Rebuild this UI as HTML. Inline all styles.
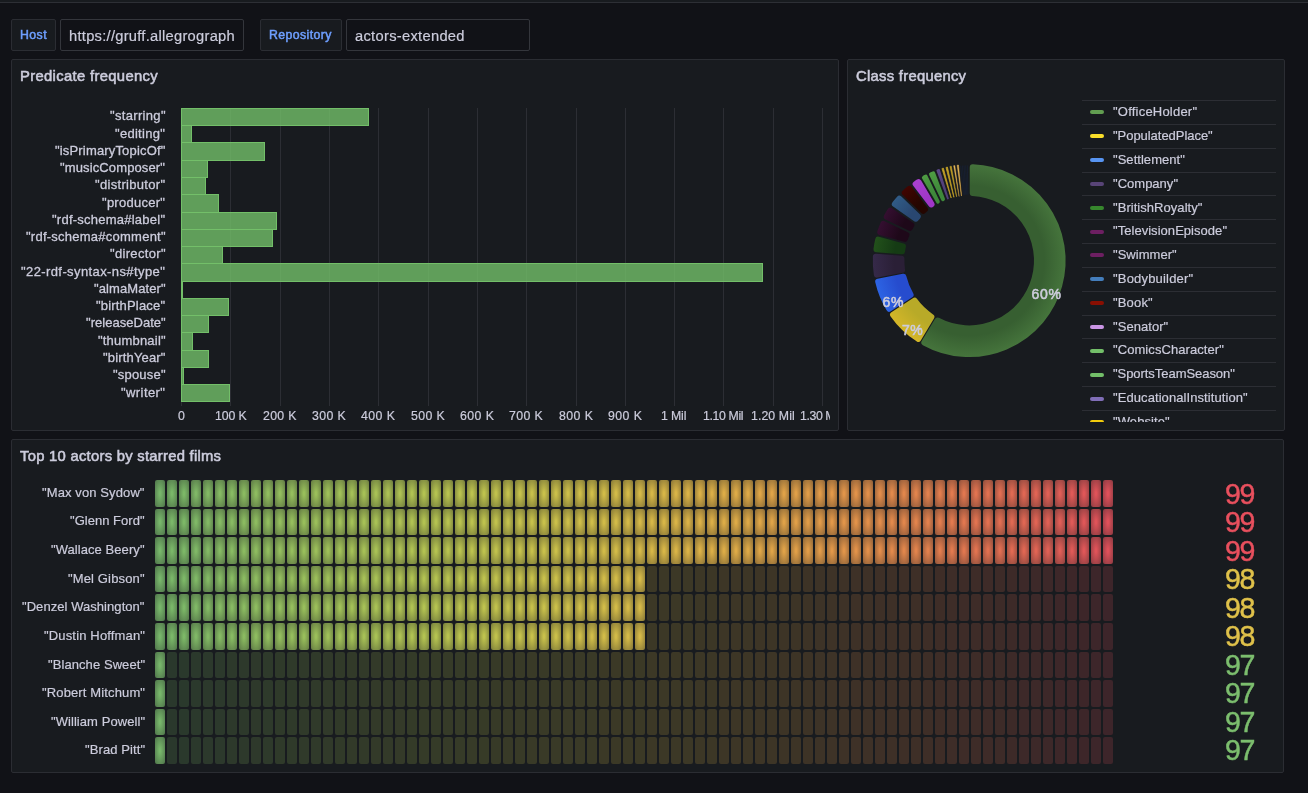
<!DOCTYPE html>
<html lang="en"><head><meta charset="utf-8"><title>Dashboard</title>
<style>
html,body{margin:0;padding:0;}
body{width:1308px;height:793px;background:#111217;overflow:hidden;position:relative;font-family:"Liberation Sans",sans-serif;color:rgb(204,204,220);font-size:13px;}
.abs{position:absolute;}
.t{position:absolute;white-space:nowrap;line-height:0;will-change:transform;}
.t::before{content:"";display:inline-block;width:0;height:40px;vertical-align:baseline;}
.topbar{position:absolute;left:0;top:0;width:1308px;height:2px;background:#181b1f;border-bottom:1px solid #2d2f35;}
.lbl{position:absolute;top:19px;height:32px;border:1px solid #2b2d33;border-radius:2px;background:#181b1f;box-sizing:border-box;}
.inp{position:absolute;top:19px;height:32px;border:1px solid #34363c;border-radius:2px;background:#111217;box-sizing:border-box;}
.panel{position:absolute;background:#181b1f;border:1px solid #2b2d33;border-radius:2px;box-sizing:border-box;overflow:hidden;}
.grid{position:absolute;width:1px;background:#2c2e34;}
.bar{position:absolute;box-sizing:border-box;}
.leg{position:absolute;left:0;width:194px;height:1px;background:#2c2e34;}
.mk{position:absolute;width:14px;height:4px;border-radius:2px;}
.row{position:absolute;left:143px;width:960px;height:26.63px;}
.row i{position:absolute;top:0;height:100%;width:10px;border-radius:2px;}
</style></head><body>
<div class="topbar"></div>

<div class="lbl" style="left:11px;width:45px;"></div>
<div class="inp" style="left:60px;width:184px;"></div>
<div class="lbl" style="left:260px;width:82px;"></div>
<div class="inp" style="left:346px;width:184px;"></div>
<span class="t" style="left:19.60px;top:-1px;font-size:12.3px;letter-spacing:0.434px;color:rgb(110,159,255);-webkit-text-stroke:0.5px currentColor;">Host</span>
<span class="t" style="left:69.40px;top:1px;font-size:14.7px;letter-spacing:0.270px;-webkit-text-stroke:0.2px currentColor;">https://gruff.allegrograph</span>
<span class="t" style="left:268.60px;top:-1px;font-size:12.3px;letter-spacing:0.413px;color:rgb(110,159,255);-webkit-text-stroke:0.5px currentColor;">Repository</span>
<span class="t" style="left:355.00px;top:1px;font-size:14.7px;letter-spacing:0.298px;-webkit-text-stroke:0.2px currentColor;">actors-extended</span>
<div class="panel" style="left:11px;top:59px;width:828px;height:372px;">
<span class="t" style="left:7.70px;top:-19px;font-size:14.8px;letter-spacing:0.338px;-webkit-text-stroke:0.55px currentColor;">Predicate frequency</span>
<div class="abs" style="left:8px;top:8px;width:810px;height:354px;overflow:hidden;">
<div class="grid" style="left:161px;top:40px;height:298px;"></div>
<div class="grid" style="left:210px;top:40px;height:298px;"></div>
<div class="grid" style="left:260px;top:40px;height:298px;"></div>
<div class="grid" style="left:309px;top:40px;height:298px;"></div>
<div class="grid" style="left:358px;top:40px;height:298px;"></div>
<div class="grid" style="left:408px;top:40px;height:298px;"></div>
<div class="grid" style="left:457px;top:40px;height:298px;"></div>
<div class="grid" style="left:506px;top:40px;height:298px;"></div>
<div class="grid" style="left:556px;top:40px;height:298px;"></div>
<div class="grid" style="left:605px;top:40px;height:298px;"></div>
<div class="grid" style="left:654px;top:40px;height:298px;"></div>
<div class="grid" style="left:703px;top:40px;height:298px;"></div>
<div class="grid" style="left:753px;top:40px;height:298px;"></div>
<div class="grid" style="left:802px;top:40px;height:298px;"></div>
<div class="bar" style="left:161px;top:40px;width:188px;height:18px;background:rgba(115,191,105,0.8);border:1px solid rgb(115,191,105);"></div>
<div class="bar" style="left:161px;top:57px;width:11px;height:18px;background:rgba(115,191,105,0.8);border:1px solid rgb(115,191,105);"></div>
<div class="bar" style="left:161px;top:74px;width:84px;height:19px;background:rgba(115,191,105,0.8);border:1px solid rgb(115,191,105);"></div>
<div class="bar" style="left:161px;top:92px;width:27px;height:18px;background:rgba(115,191,105,0.8);border:1px solid rgb(115,191,105);"></div>
<div class="bar" style="left:161px;top:109px;width:25px;height:18px;background:rgba(115,191,105,0.8);border:1px solid rgb(115,191,105);"></div>
<div class="bar" style="left:161px;top:126px;width:38px;height:19px;background:rgba(115,191,105,0.8);border:1px solid rgb(115,191,105);"></div>
<div class="bar" style="left:161px;top:144px;width:96px;height:18px;background:rgba(115,191,105,0.8);border:1px solid rgb(115,191,105);"></div>
<div class="bar" style="left:161px;top:161px;width:92px;height:18px;background:rgba(115,191,105,0.8);border:1px solid rgb(115,191,105);"></div>
<div class="bar" style="left:161px;top:178px;width:42px;height:18px;background:rgba(115,191,105,0.8);border:1px solid rgb(115,191,105);"></div>
<div class="bar" style="left:161px;top:195px;width:582px;height:19px;background:rgba(115,191,105,0.8);border:1px solid rgb(115,191,105);"></div>
<div class="bar" style="left:161px;top:213px;width:2px;height:18px;background:rgb(115,191,105);"></div>
<div class="bar" style="left:161px;top:230px;width:48px;height:18px;background:rgba(115,191,105,0.8);border:1px solid rgb(115,191,105);"></div>
<div class="bar" style="left:161px;top:247px;width:28px;height:18px;background:rgba(115,191,105,0.8);border:1px solid rgb(115,191,105);"></div>
<div class="bar" style="left:161px;top:264px;width:12px;height:19px;background:rgba(115,191,105,0.8);border:1px solid rgb(115,191,105);"></div>
<div class="bar" style="left:161px;top:282px;width:28px;height:18px;background:rgba(115,191,105,0.8);border:1px solid rgb(115,191,105);"></div>
<div class="bar" style="left:161px;top:299px;width:3px;height:18px;background:rgba(115,191,105,0.8);border:1px solid rgb(115,191,105);"></div>
<div class="bar" style="left:161px;top:316px;width:49px;height:18px;background:rgba(115,191,105,0.8);border:1px solid rgb(115,191,105);"></div>
<span class="t" style="left:89.70px;top:12px;font-size:13px;letter-spacing:0.325px;-webkit-text-stroke:0.3px currentColor;">"starring"</span>
<span class="t" style="left:95.40px;top:30px;font-size:13px;letter-spacing:0.282px;-webkit-text-stroke:0.3px currentColor;">"editing"</span>
<span class="t" style="left:34.90px;top:47px;font-size:13px;letter-spacing:0.167px;-webkit-text-stroke:0.3px currentColor;">"isPrimaryTopicOf"</span>
<span class="t" style="left:40.30px;top:64px;font-size:13px;letter-spacing:0.125px;-webkit-text-stroke:0.3px currentColor;">"musicComposer"</span>
<span class="t" style="left:75.20px;top:81px;font-size:13px;letter-spacing:0.307px;-webkit-text-stroke:0.3px currentColor;">"distributor"</span>
<span class="t" style="left:82.30px;top:99px;font-size:13px;letter-spacing:0.261px;-webkit-text-stroke:0.3px currentColor;">"producer"</span>
<span class="t" style="left:32.20px;top:116px;font-size:13px;letter-spacing:0.238px;-webkit-text-stroke:0.3px currentColor;">"rdf-schema#label"</span>
<span class="t" style="left:5.60px;top:133px;font-size:13px;letter-spacing:0.245px;-webkit-text-stroke:0.3px currentColor;">"rdf-schema#comment"</span>
<span class="t" style="left:89.70px;top:150px;font-size:13px;letter-spacing:0.325px;-webkit-text-stroke:0.3px currentColor;">"director"</span>
<span class="t" style="left:1.40px;top:168px;font-size:13px;letter-spacing:0.402px;-webkit-text-stroke:0.3px currentColor;">"22-rdf-syntax-ns#type"</span>
<span class="t" style="left:73.60px;top:185px;font-size:13px;letter-spacing:0.096px;-webkit-text-stroke:0.3px currentColor;">"almaMater"</span>
<span class="t" style="left:76.20px;top:202px;font-size:13px;letter-spacing:0.178px;-webkit-text-stroke:0.3px currentColor;">"birthPlace"</span>
<span class="t" style="left:65.50px;top:219px;font-size:13px;letter-spacing:0.031px;-webkit-text-stroke:0.3px currentColor;">"releaseDate"</span>
<span class="t" style="left:77.60px;top:237px;font-size:13px;letter-spacing:0.199px;-webkit-text-stroke:0.3px currentColor;">"thumbnail"</span>
<span class="t" style="left:82.70px;top:254px;font-size:13px;letter-spacing:0.170px;-webkit-text-stroke:0.3px currentColor;">"birthYear"</span>
<span class="t" style="left:92.70px;top:271px;font-size:13px;letter-spacing:0.192px;-webkit-text-stroke:0.3px currentColor;">"spouse"</span>
<span class="t" style="left:101.20px;top:289px;font-size:13px;letter-spacing:0.426px;-webkit-text-stroke:0.3px currentColor;">"writer"</span>
<span class="t" style="left:157.85px;top:312px;font-size:12.3px;-webkit-text-stroke:0.2px currentColor;">0</span>
<span class="t" style="left:194.55px;top:312px;font-size:12.3px;letter-spacing:-0.110px;-webkit-text-stroke:0.2px currentColor;">100 K</span>
<span class="t" style="left:242.95px;top:312px;font-size:12.3px;letter-spacing:0.340px;-webkit-text-stroke:0.2px currentColor;">200 K</span>
<span class="t" style="left:292.10px;top:312px;font-size:12.3px;letter-spacing:0.415px;-webkit-text-stroke:0.2px currentColor;">300 K</span>
<span class="t" style="left:341.30px;top:312px;font-size:12.3px;letter-spacing:0.465px;-webkit-text-stroke:0.2px currentColor;">400 K</span>
<span class="t" style="left:390.70px;top:312px;font-size:12.3px;letter-spacing:0.415px;-webkit-text-stroke:0.2px currentColor;">500 K</span>
<span class="t" style="left:439.90px;top:312px;font-size:12.3px;letter-spacing:0.465px;-webkit-text-stroke:0.2px currentColor;">600 K</span>
<span class="t" style="left:489.30px;top:312px;font-size:12.3px;letter-spacing:0.415px;-webkit-text-stroke:0.2px currentColor;">700 K</span>
<span class="t" style="left:538.50px;top:312px;font-size:12.3px;letter-spacing:0.465px;-webkit-text-stroke:0.2px currentColor;">800 K</span>
<span class="t" style="left:587.80px;top:312px;font-size:12.3px;letter-spacing:0.465px;-webkit-text-stroke:0.2px currentColor;">900 K</span>
<span class="t" style="left:641.40px;top:312px;font-size:12.3px;letter-spacing:-0.142px;-webkit-text-stroke:0.2px currentColor;">1 Mil</span>
<span class="t" style="left:683.15px;top:312px;font-size:12.3px;letter-spacing:-0.366px;-webkit-text-stroke:0.2px currentColor;">1.10 Mil</span>
<span class="t" style="left:730.85px;top:312px;font-size:12.3px;letter-spacing:0.091px;-webkit-text-stroke:0.2px currentColor;">1.20 Mil</span>
<span class="t" style="left:780.30px;top:312px;font-size:12.3px;-webkit-text-stroke:0.2px currentColor;letter-spacing:-0.4px;">1.30 Mil</span>
</div></div>
<div class="panel" style="left:847px;top:59px;width:438px;height:372px;">
<span class="t" style="left:7.80px;top:-19px;font-size:14.8px;letter-spacing:0.279px;-webkit-text-stroke:0.55px currentColor;">Class frequency</span>
<svg class="abs" style="left:0;top:0;" width="436" height="370" viewBox="0 0 436 370">
<defs>
<radialGradient id="g629E51" gradientUnits="userSpaceOnUse" cx="0" cy="0" r="112.4"><stop offset="0.667" stop-color="rgb(55,95,49)"/><stop offset="1" stop-color="rgb(80,132,68)"/></radialGradient>
<radialGradient id="gFADE2A" gradientUnits="userSpaceOnUse" cx="0" cy="0" r="112.4"><stop offset="0.667" stop-color="rgb(184,170,40)"/><stop offset="1" stop-color="rgb(234,192,40)"/></radialGradient>
<radialGradient id="g5794F2" gradientUnits="userSpaceOnUse" cx="0" cy="0" r="112.4"><stop offset="0.667" stop-color="rgb(38,76,206)"/><stop offset="1" stop-color="rgb(50,118,245)"/></radialGradient>
<radialGradient id="g584477" gradientUnits="userSpaceOnUse" cx="0" cy="0" r="112.4"><stop offset="0.667" stop-color="rgb(42,31,54)"/><stop offset="1" stop-color="rgb(62,49,87)"/></radialGradient>
<radialGradient id="g37872D" gradientUnits="userSpaceOnUse" cx="0" cy="0" r="112.4"><stop offset="0.667" stop-color="rgb(21,59,20)"/><stop offset="1" stop-color="rgb(44,97,32)"/></radialGradient>
<radialGradient id="g6D1F62" gradientUnits="userSpaceOnUse" cx="0" cy="0" r="112.4"><stop offset="0.667" stop-color="rgb(30,8,25)"/><stop offset="1" stop-color="rgb(69,20,66)"/></radialGradient>
<radialGradient id="g447EBC" gradientUnits="userSpaceOnUse" cx="0" cy="0" r="112.4"><stop offset="0.667" stop-color="rgb(41,71,113)"/><stop offset="1" stop-color="rgb(54,107,151)"/></radialGradient>
<radialGradient id="g890F02" gradientUnits="userSpaceOnUse" cx="0" cy="0" r="112.4"><stop offset="0.667" stop-color="rgb(36,6,1)"/><stop offset="1" stop-color="rgb(87,4,1)"/></radialGradient>
<radialGradient id="gCA95E5" gradientUnits="userSpaceOnUse" cx="0" cy="0" r="112.4"><stop offset="0.667" stop-color="rgb(160,55,200)"/><stop offset="1" stop-color="rgb(176,72,212)"/></radialGradient>
<radialGradient id="g73BF69" gradientUnits="userSpaceOnUse" cx="0" cy="0" r="112.4"><stop offset="0.667" stop-color="rgb(62,136,58)"/><stop offset="1" stop-color="rgb(91,172,73)"/></radialGradient>
<radialGradient id="g806EB7" gradientUnits="userSpaceOnUse" cx="0" cy="0" r="112.4"><stop offset="0.667" stop-color="rgb(80,62,120)"/><stop offset="1" stop-color="rgb(96,78,142)"/></radialGradient>
<radialGradient id="gF2CC0C" gradientUnits="userSpaceOnUse" cx="0" cy="0" r="112.4"><stop offset="0.667" stop-color="rgb(184,152,36)"/><stop offset="1" stop-color="rgb(206,170,42)"/></radialGradient>
<radialGradient id="gF2C96D" gradientUnits="userSpaceOnUse" cx="0" cy="0" r="112.4"><stop offset="0.667" stop-color="rgb(222,172,75)"/><stop offset="1" stop-color="rgb(235,190,95)"/></radialGradient>
</defs>
<g transform="translate(121.2,200.6)">
<path d="M3.55,-93.33A93.40,93.40 0 1 1 -44.88,81.91L-31.72,59.92A67.80,67.80 0 1 0 3.55,-67.71Z" fill="url(#g629E51)" stroke="url(#g629E51)" stroke-width="6.00" stroke-linejoin="round"/>
<path d="M-50.98,78.26A93.40,93.40 0 0 1 -76.15,54.08L-54.71,40.04A67.80,67.80 0 0 0 -37.82,56.27Z" fill="url(#gFADE2A)" stroke="url(#gFADE2A)" stroke-width="6.00" stroke-linejoin="round"/>
<path d="M-80.04,48.13A93.40,93.40 0 0 1 -91.01,20.98L-65.84,16.17A67.80,67.80 0 0 0 -58.60,34.10Z" fill="url(#g5794F2)" stroke="url(#g5794F2)" stroke-width="6.00" stroke-linejoin="round"/>
<path d="M-92.34,14.00A93.40,93.40 0 0 1 -93.32,-3.95L-67.77,-1.89A67.80,67.80 0 0 0 -67.17,9.20Z" fill="url(#g584477)" stroke="url(#g584477)" stroke-width="6.00" stroke-linejoin="round"/>
<path d="M-92.70,-11.42A93.40,93.40 0 0 1 -91.01,-20.97L-66.30,-14.17A67.80,67.80 0 0 0 -67.15,-9.37Z" fill="url(#g37872D)" stroke="url(#g37872D)" stroke-width="6.00" stroke-linejoin="round"/>
<path d="M-88.92,-28.59A93.40,93.40 0 0 1 -85.86,-36.76L-62.75,-25.68A67.80,67.80 0 0 0 -64.21,-21.78Z" fill="url(#g6D1F62)" stroke="url(#g6D1F62)" stroke-width="6.00" stroke-linejoin="round"/>
<path d="M-82.45,-43.88A93.40,93.40 0 0 1 -78.88,-50.01L-57.83,-35.39A67.80,67.80 0 0 0 -59.33,-32.81Z" fill="url(#g6D1F62)" stroke="url(#g6D1F62)" stroke-width="6.00" stroke-linejoin="round"/>
<path d="M-74.37,-56.50A93.40,93.40 0 0 1 -69.87,-61.98L-51.43,-44.18A67.80,67.80 0 0 0 -53.33,-41.87Z" fill="url(#g447EBC)" stroke="url(#g447EBC)" stroke-width="6.00" stroke-linejoin="round"/>
<path d="M-64.38,-67.66A93.40,93.40 0 0 1 -59.82,-71.73L-44.25,-51.37A67.80,67.80 0 0 0 -45.94,-49.86Z" fill="url(#g890F02)" stroke="url(#g890F02)" stroke-width="6.00" stroke-linejoin="round"/>
<path d="M-53.60,-76.54A93.44,93.44 0 0 1 -50.61,-78.55L-37.60,-56.37A67.76,67.76 0 0 0 -37.98,-56.11Z" fill="url(#gCA95E5)" stroke="url(#gCA95E5)" stroke-width="5.92" stroke-linejoin="round"/>
<path d="M-45.60,-82.98A94.69,94.69 0 0 1 -43.30,-84.21L-31.12,-58.79A66.51,66.51 0 0 0 -31.33,-58.67Z" fill="url(#g73BF69)" stroke="url(#g73BF69)" stroke-width="3.43" stroke-linejoin="round"/>
<path d="M-38.34,-86.45A94.57,94.57 0 0 1 -35.86,-87.51L-26.02,-61.34A66.63,66.63 0 0 0 -26.26,-61.23Z" fill="url(#g73BF69)" stroke="url(#g73BF69)" stroke-width="3.65" stroke-linejoin="round"/>
<path d="M-31.91,-90.05A95.53,95.53 0 0 1 -30.14,-90.66L-21.25,-62.13A65.67,65.67 0 0 0 -21.40,-62.08Z" fill="url(#g806EB7)" stroke="url(#g806EB7)" stroke-width="1.73" stroke-linejoin="round"/>
<path d="M-27.24,-92.04A95.99,95.99 0 0 1 -25.84,-92.44L-17.97,-62.69A65.21,65.21 0 0 0 -18.09,-62.66Z" fill="url(#gF2CC0C)" stroke="url(#gF2CC0C)" stroke-width="0.83" stroke-linejoin="round"/>
<path d="M-23.20,-93.14A95.99,95.99 0 0 1 -21.78,-93.48L-15.22,-63.41A65.21,65.21 0 0 0 -15.34,-63.38Z" fill="url(#gF2CC0C)" stroke="url(#gF2CC0C)" stroke-width="0.83" stroke-linejoin="round"/>
<path d="M-19.25,-94.15A96.10,96.10 0 0 1 -17.92,-94.41L-12.53,-63.88A65.10,65.10 0 0 0 -12.64,-63.86Z" fill="url(#gF2CC0C)" stroke="url(#gF2CC0C)" stroke-width="0.60" stroke-linejoin="round"/>
<path d="M-15.59,-94.94A96.21,96.21 0 0 1 -14.35,-95.14L-10.06,-64.20A64.99,64.99 0 0 0 -10.16,-64.19Z" fill="url(#gF2C96D)" stroke="url(#gF2C96D)" stroke-width="0.38" stroke-linejoin="round"/>
<path d="M-12.03,-95.40A96.16,96.16 0 0 1 -10.74,-95.55L-7.65,-64.59A65.04,65.04 0 0 0 -7.76,-64.58Z" fill="url(#gF2C96D)" stroke="url(#gF2C96D)" stroke-width="0.49" stroke-linejoin="round"/>
<path d="M-5.89,-66.04L-8.44,-94.52" stroke="rgb(23,33,54)" stroke-width="0.7" stroke-linecap="round" fill="none"/>
<path d="M-4.74,-66.13L-6.79,-94.66" stroke="rgb(23,33,54)" stroke-width="0.7" stroke-linecap="round" fill="none"/>
<path d="M-3.59,-66.20L-5.13,-94.76" stroke="rgb(23,33,54)" stroke-width="0.7" stroke-linecap="round" fill="none"/>
<path d="M-2.43,-66.26L-3.48,-94.84" stroke="rgb(23,33,54)" stroke-width="0.7" stroke-linecap="round" fill="none"/>
<path d="M-1.27,-66.29L-1.82,-94.88" stroke="rgb(23,33,54)" stroke-width="0.7" stroke-linecap="round" fill="none"/>
<text x="77.4" y="38.8" text-anchor="middle" font-family="Liberation Sans, sans-serif" font-size="14" letter-spacing="0.7" fill="rgb(204,204,220)" stroke="rgb(204,204,220)" stroke-width="0.6">60%</text>
<text x="-56.5" y="74.2" text-anchor="middle" font-family="Liberation Sans, sans-serif" font-size="14" letter-spacing="0.7" fill="rgb(204,204,220)" stroke="rgb(204,204,220)" stroke-width="0.6">7%</text>
<text x="-75.8" y="46.2" text-anchor="middle" font-family="Liberation Sans, sans-serif" font-size="14" letter-spacing="0.7" fill="rgb(204,204,220)" stroke="rgb(204,204,220)" stroke-width="0.6">6%</text>
</g></svg>
<div class="abs" style="left:234px;top:36px;width:194px;height:326px;overflow:hidden;">
<div class="leg" style="top:4px;"></div>
<div class="mk" style="left:8px;top:14px;background:rgb(98,158,81)"></div>
<span class="t" style="left:31.00px;top:-20px;font-size:13px;letter-spacing:0.212px;-webkit-text-stroke:0.2px currentColor;">"OfficeHolder"</span>
<div class="leg" style="top:28px;"></div>
<div class="mk" style="left:8px;top:38px;background:rgb(250,222,42)"></div>
<span class="t" style="left:31.00px;top:4px;font-size:13px;letter-spacing:-0.041px;-webkit-text-stroke:0.2px currentColor;">"PopulatedPlace"</span>
<div class="leg" style="top:52px;"></div>
<div class="mk" style="left:8px;top:62px;background:rgb(87,148,242)"></div>
<span class="t" style="left:31.00px;top:28px;font-size:13px;letter-spacing:0.039px;-webkit-text-stroke:0.2px currentColor;">"Settlement"</span>
<div class="leg" style="top:76px;"></div>
<div class="mk" style="left:8px;top:86px;background:rgb(88,68,119)"></div>
<span class="t" style="left:31.00px;top:52px;font-size:13px;letter-spacing:0.016px;-webkit-text-stroke:0.2px currentColor;">"Company"</span>
<div class="leg" style="top:99px;"></div>
<div class="mk" style="left:8px;top:110px;background:rgb(55,135,45)"></div>
<span class="t" style="left:31.00px;top:76px;font-size:13px;letter-spacing:0.046px;-webkit-text-stroke:0.2px currentColor;">"BritishRoyalty"</span>
<div class="leg" style="top:123px;"></div>
<div class="mk" style="left:8px;top:134px;background:rgb(109,31,98)"></div>
<span class="t" style="left:31.00px;top:99px;font-size:13px;letter-spacing:0.039px;-webkit-text-stroke:0.2px currentColor;">"TelevisionEpisode"</span>
<div class="leg" style="top:147px;"></div>
<div class="mk" style="left:8px;top:157px;background:rgb(109,31,98)"></div>
<span class="t" style="left:31.00px;top:123px;font-size:13px;letter-spacing:0.037px;-webkit-text-stroke:0.2px currentColor;">"Swimmer"</span>
<div class="leg" style="top:171px;"></div>
<div class="mk" style="left:8px;top:181px;background:rgb(68,126,188)"></div>
<span class="t" style="left:31.00px;top:147px;font-size:13px;letter-spacing:0.184px;-webkit-text-stroke:0.2px currentColor;">"Bodybuilder"</span>
<div class="leg" style="top:195px;"></div>
<div class="mk" style="left:8px;top:205px;background:rgb(137,15,2)"></div>
<span class="t" style="left:31.00px;top:171px;font-size:13px;letter-spacing:0.165px;-webkit-text-stroke:0.2px currentColor;">"Book"</span>
<div class="leg" style="top:219px;"></div>
<div class="mk" style="left:8px;top:229px;background:rgb(202,149,229)"></div>
<span class="t" style="left:31.00px;top:195px;font-size:13px;letter-spacing:0.054px;-webkit-text-stroke:0.2px currentColor;">"Senator"</span>
<div class="leg" style="top:242px;"></div>
<div class="mk" style="left:8px;top:253px;background:rgb(115,191,105)"></div>
<span class="t" style="left:31.00px;top:218px;font-size:13px;letter-spacing:0.071px;-webkit-text-stroke:0.2px currentColor;">"ComicsCharacter"</span>
<div class="leg" style="top:266px;"></div>
<div class="mk" style="left:8px;top:277px;background:rgb(115,191,105)"></div>
<span class="t" style="left:31.00px;top:242px;font-size:13px;letter-spacing:-0.052px;-webkit-text-stroke:0.2px currentColor;">"SportsTeamSeason"</span>
<div class="leg" style="top:290px;"></div>
<div class="mk" style="left:8px;top:301px;background:rgb(128,110,183)"></div>
<span class="t" style="left:31.00px;top:266px;font-size:13px;letter-spacing:0.078px;-webkit-text-stroke:0.2px currentColor;">"EducationalInstitution"</span>
<div class="leg" style="top:314px;"></div>
<div class="mk" style="left:8px;top:324px;background:rgb(242,204,12)"></div>
<span class="t" style="left:31.00px;top:290px;font-size:13px;letter-spacing:0.091px;-webkit-text-stroke:0.2px currentColor;">"Website"</span>
</div>
</div>
<div class="panel" style="left:11px;top:439px;width:1273px;height:334px;">
<span class="t" style="left:7.90px;top:-19px;font-size:14.8px;letter-spacing:0.267px;-webkit-text-stroke:0.55px currentColor;">Top 10 actors by starred films</span>
<span class="t" style="left:30.00px;top:17px;font-size:13px;letter-spacing:0.107px;-webkit-text-stroke:0.2px currentColor;">"Max von Sydow"</span>
<div class="row" style="top:40px;height:27px;"><i style="left:0px;background:radial-gradient(rgba(124,190,110,0.95) 10%,rgba(124,190,110,0.55))"></i><i style="left:12px;background:radial-gradient(rgba(127,191,108,0.95) 10%,rgba(127,191,108,0.55))"></i><i style="left:24px;background:radial-gradient(rgba(130,192,107,0.95) 10%,rgba(130,192,107,0.55))"></i><i style="left:36px;background:radial-gradient(rgba(133,192,106,0.95) 10%,rgba(133,192,106,0.55))"></i><i style="left:48px;background:radial-gradient(rgba(136,193,104,0.95) 10%,rgba(136,193,104,0.55))"></i><i style="left:60px;background:radial-gradient(rgba(139,194,103,0.95) 10%,rgba(139,194,103,0.55))"></i><i style="left:72px;background:radial-gradient(rgba(142,195,102,0.95) 10%,rgba(142,195,102,0.55))"></i><i style="left:84px;background:radial-gradient(rgba(145,195,100,0.95) 10%,rgba(145,195,100,0.55))"></i><i style="left:96px;background:radial-gradient(rgba(148,196,99,0.95) 10%,rgba(148,196,99,0.55))"></i><i style="left:108px;background:radial-gradient(rgba(151,197,98,0.95) 10%,rgba(151,197,98,0.55))"></i><i style="left:120px;background:radial-gradient(rgba(154,198,97,0.95) 10%,rgba(154,198,97,0.55))"></i><i style="left:132px;background:radial-gradient(rgba(156,198,96,0.95) 10%,rgba(156,198,96,0.55))"></i><i style="left:144px;background:radial-gradient(rgba(159,199,94,0.95) 10%,rgba(159,199,94,0.55))"></i><i style="left:156px;background:radial-gradient(rgba(162,199,93,0.95) 10%,rgba(162,199,93,0.55))"></i><i style="left:168px;background:radial-gradient(rgba(165,200,92,0.95) 10%,rgba(165,200,92,0.55))"></i><i style="left:180px;background:radial-gradient(rgba(168,201,91,0.95) 10%,rgba(168,201,91,0.55))"></i><i style="left:192px;background:radial-gradient(rgba(171,201,90,0.95) 10%,rgba(171,201,90,0.55))"></i><i style="left:204px;background:radial-gradient(rgba(174,201,89,0.95) 10%,rgba(174,201,89,0.55))"></i><i style="left:216px;background:radial-gradient(rgba(176,202,88,0.95) 10%,rgba(176,202,88,0.55))"></i><i style="left:228px;background:radial-gradient(rgba(179,202,87,0.95) 10%,rgba(179,202,87,0.55))"></i><i style="left:240px;background:radial-gradient(rgba(182,202,86,0.95) 10%,rgba(182,202,86,0.55))"></i><i style="left:252px;background:radial-gradient(rgba(184,203,85,0.95) 10%,rgba(184,203,85,0.55))"></i><i style="left:264px;background:radial-gradient(rgba(187,203,84,0.95) 10%,rgba(187,203,84,0.55))"></i><i style="left:276px;background:radial-gradient(rgba(189,203,83,0.95) 10%,rgba(189,203,83,0.55))"></i><i style="left:288px;background:radial-gradient(rgba(192,203,82,0.95) 10%,rgba(192,203,82,0.55))"></i><i style="left:300px;background:radial-gradient(rgba(194,203,81,0.95) 10%,rgba(194,203,81,0.55))"></i><i style="left:312px;background:radial-gradient(rgba(197,203,81,0.95) 10%,rgba(197,203,81,0.55))"></i><i style="left:324px;background:radial-gradient(rgba(199,203,80,0.95) 10%,rgba(199,203,80,0.55))"></i><i style="left:336px;background:radial-gradient(rgba(201,202,79,0.95) 10%,rgba(201,202,79,0.55))"></i><i style="left:348px;background:radial-gradient(rgba(204,202,79,0.95) 10%,rgba(204,202,79,0.55))"></i><i style="left:360px;background:radial-gradient(rgba(206,202,78,0.95) 10%,rgba(206,202,78,0.55))"></i><i style="left:372px;background:radial-gradient(rgba(208,201,77,0.95) 10%,rgba(208,201,77,0.55))"></i><i style="left:384px;background:radial-gradient(rgba(210,201,77,0.95) 10%,rgba(210,201,77,0.55))"></i><i style="left:396px;background:radial-gradient(rgba(212,200,76,0.95) 10%,rgba(212,200,76,0.55))"></i><i style="left:408px;background:radial-gradient(rgba(214,199,76,0.95) 10%,rgba(214,199,76,0.55))"></i><i style="left:420px;background:radial-gradient(rgba(216,198,75,0.95) 10%,rgba(216,198,75,0.55))"></i><i style="left:432px;background:radial-gradient(rgba(217,197,75,0.95) 10%,rgba(217,197,75,0.55))"></i><i style="left:444px;background:radial-gradient(rgba(219,196,74,0.95) 10%,rgba(219,196,74,0.55))"></i><i style="left:456px;background:radial-gradient(rgba(220,195,74,0.95) 10%,rgba(220,195,74,0.55))"></i><i style="left:468px;background:radial-gradient(rgba(222,194,74,0.95) 10%,rgba(222,194,74,0.55))"></i><i style="left:480px;background:radial-gradient(rgba(223,193,74,0.95) 10%,rgba(223,193,74,0.55))"></i><i style="left:492px;background:radial-gradient(rgba(225,191,73,0.95) 10%,rgba(225,191,73,0.55))"></i><i style="left:504px;background:radial-gradient(rgba(226,190,73,0.95) 10%,rgba(226,190,73,0.55))"></i><i style="left:516px;background:radial-gradient(rgba(227,188,73,0.95) 10%,rgba(227,188,73,0.55))"></i><i style="left:528px;background:radial-gradient(rgba(228,186,73,0.95) 10%,rgba(228,186,73,0.55))"></i><i style="left:540px;background:radial-gradient(rgba(229,184,73,0.95) 10%,rgba(229,184,73,0.55))"></i><i style="left:552px;background:radial-gradient(rgba(230,182,73,0.95) 10%,rgba(230,182,73,0.55))"></i><i style="left:564px;background:radial-gradient(rgba(231,180,73,0.95) 10%,rgba(231,180,73,0.55))"></i><i style="left:576px;background:radial-gradient(rgba(232,178,73,0.95) 10%,rgba(232,178,73,0.55))"></i><i style="left:588px;background:radial-gradient(rgba(232,176,73,0.95) 10%,rgba(232,176,73,0.55))"></i><i style="left:600px;background:radial-gradient(rgba(233,173,73,0.95) 10%,rgba(233,173,73,0.55))"></i><i style="left:612px;background:radial-gradient(rgba(234,171,74,0.95) 10%,rgba(234,171,74,0.55))"></i><i style="left:624px;background:radial-gradient(rgba(234,169,74,0.95) 10%,rgba(234,169,74,0.55))"></i><i style="left:636px;background:radial-gradient(rgba(235,166,74,0.95) 10%,rgba(235,166,74,0.55))"></i><i style="left:648px;background:radial-gradient(rgba(235,163,74,0.95) 10%,rgba(235,163,74,0.55))"></i><i style="left:660px;background:radial-gradient(rgba(235,161,75,0.95) 10%,rgba(235,161,75,0.55))"></i><i style="left:672px;background:radial-gradient(rgba(236,158,75,0.95) 10%,rgba(236,158,75,0.55))"></i><i style="left:684px;background:radial-gradient(rgba(236,155,76,0.95) 10%,rgba(236,155,76,0.55))"></i><i style="left:696px;background:radial-gradient(rgba(236,152,76,0.95) 10%,rgba(236,152,76,0.55))"></i><i style="left:708px;background:radial-gradient(rgba(236,149,76,0.95) 10%,rgba(236,149,76,0.55))"></i><i style="left:720px;background:radial-gradient(rgba(236,146,77,0.95) 10%,rgba(236,146,77,0.55))"></i><i style="left:732px;background:radial-gradient(rgba(236,143,78,0.95) 10%,rgba(236,143,78,0.55))"></i><i style="left:744px;background:radial-gradient(rgba(236,140,78,0.95) 10%,rgba(236,140,78,0.55))"></i><i style="left:756px;background:radial-gradient(rgba(236,137,79,0.95) 10%,rgba(236,137,79,0.55))"></i><i style="left:768px;background:radial-gradient(rgba(236,134,80,0.95) 10%,rgba(236,134,80,0.55))"></i><i style="left:780px;background:radial-gradient(rgba(236,130,80,0.95) 10%,rgba(236,130,80,0.55))"></i><i style="left:792px;background:radial-gradient(rgba(236,127,81,0.95) 10%,rgba(236,127,81,0.55))"></i><i style="left:804px;background:radial-gradient(rgba(236,124,82,0.95) 10%,rgba(236,124,82,0.55))"></i><i style="left:816px;background:radial-gradient(rgba(236,120,83,0.95) 10%,rgba(236,120,83,0.55))"></i><i style="left:828px;background:radial-gradient(rgba(236,117,83,0.95) 10%,rgba(236,117,83,0.55))"></i><i style="left:840px;background:radial-gradient(rgba(235,114,84,0.95) 10%,rgba(235,114,84,0.55))"></i><i style="left:852px;background:radial-gradient(rgba(235,110,85,0.95) 10%,rgba(235,110,85,0.55))"></i><i style="left:864px;background:radial-gradient(rgba(235,107,86,0.95) 10%,rgba(235,107,86,0.55))"></i><i style="left:876px;background:radial-gradient(rgba(235,104,87,0.95) 10%,rgba(235,104,87,0.55))"></i><i style="left:888px;background:radial-gradient(rgba(234,100,88,0.95) 10%,rgba(234,100,88,0.55))"></i><i style="left:900px;background:radial-gradient(rgba(234,97,89,0.95) 10%,rgba(234,97,89,0.55))"></i><i style="left:912px;background:radial-gradient(rgba(234,93,90,0.95) 10%,rgba(234,93,90,0.55))"></i><i style="left:924px;background:radial-gradient(rgba(234,90,91,0.95) 10%,rgba(234,90,91,0.55))"></i><i style="left:936px;background:radial-gradient(rgba(233,86,92,0.95) 10%,rgba(233,86,92,0.55))"></i><i style="left:948px;background:radial-gradient(rgba(233,83,93,0.95) 10%,rgba(233,83,93,0.55))"></i></div>
<span class="t" style="left:1212.50px;top:24px;font-size:28.6px;letter-spacing:-1.413px;color:rgb(233,80,94);-webkit-text-stroke:0.45px currentColor;">99</span>
<span class="t" style="left:58.00px;top:45px;font-size:13px;letter-spacing:0.021px;-webkit-text-stroke:0.2px currentColor;">"Glenn Ford"</span>
<div class="row" style="top:69px;height:26px;"><i style="left:0px;background:radial-gradient(rgba(124,190,110,0.95) 10%,rgba(124,190,110,0.55))"></i><i style="left:12px;background:radial-gradient(rgba(127,191,108,0.95) 10%,rgba(127,191,108,0.55))"></i><i style="left:24px;background:radial-gradient(rgba(130,192,107,0.95) 10%,rgba(130,192,107,0.55))"></i><i style="left:36px;background:radial-gradient(rgba(133,192,106,0.95) 10%,rgba(133,192,106,0.55))"></i><i style="left:48px;background:radial-gradient(rgba(136,193,104,0.95) 10%,rgba(136,193,104,0.55))"></i><i style="left:60px;background:radial-gradient(rgba(139,194,103,0.95) 10%,rgba(139,194,103,0.55))"></i><i style="left:72px;background:radial-gradient(rgba(142,195,102,0.95) 10%,rgba(142,195,102,0.55))"></i><i style="left:84px;background:radial-gradient(rgba(145,195,100,0.95) 10%,rgba(145,195,100,0.55))"></i><i style="left:96px;background:radial-gradient(rgba(148,196,99,0.95) 10%,rgba(148,196,99,0.55))"></i><i style="left:108px;background:radial-gradient(rgba(151,197,98,0.95) 10%,rgba(151,197,98,0.55))"></i><i style="left:120px;background:radial-gradient(rgba(154,198,97,0.95) 10%,rgba(154,198,97,0.55))"></i><i style="left:132px;background:radial-gradient(rgba(156,198,96,0.95) 10%,rgba(156,198,96,0.55))"></i><i style="left:144px;background:radial-gradient(rgba(159,199,94,0.95) 10%,rgba(159,199,94,0.55))"></i><i style="left:156px;background:radial-gradient(rgba(162,199,93,0.95) 10%,rgba(162,199,93,0.55))"></i><i style="left:168px;background:radial-gradient(rgba(165,200,92,0.95) 10%,rgba(165,200,92,0.55))"></i><i style="left:180px;background:radial-gradient(rgba(168,201,91,0.95) 10%,rgba(168,201,91,0.55))"></i><i style="left:192px;background:radial-gradient(rgba(171,201,90,0.95) 10%,rgba(171,201,90,0.55))"></i><i style="left:204px;background:radial-gradient(rgba(174,201,89,0.95) 10%,rgba(174,201,89,0.55))"></i><i style="left:216px;background:radial-gradient(rgba(176,202,88,0.95) 10%,rgba(176,202,88,0.55))"></i><i style="left:228px;background:radial-gradient(rgba(179,202,87,0.95) 10%,rgba(179,202,87,0.55))"></i><i style="left:240px;background:radial-gradient(rgba(182,202,86,0.95) 10%,rgba(182,202,86,0.55))"></i><i style="left:252px;background:radial-gradient(rgba(184,203,85,0.95) 10%,rgba(184,203,85,0.55))"></i><i style="left:264px;background:radial-gradient(rgba(187,203,84,0.95) 10%,rgba(187,203,84,0.55))"></i><i style="left:276px;background:radial-gradient(rgba(189,203,83,0.95) 10%,rgba(189,203,83,0.55))"></i><i style="left:288px;background:radial-gradient(rgba(192,203,82,0.95) 10%,rgba(192,203,82,0.55))"></i><i style="left:300px;background:radial-gradient(rgba(194,203,81,0.95) 10%,rgba(194,203,81,0.55))"></i><i style="left:312px;background:radial-gradient(rgba(197,203,81,0.95) 10%,rgba(197,203,81,0.55))"></i><i style="left:324px;background:radial-gradient(rgba(199,203,80,0.95) 10%,rgba(199,203,80,0.55))"></i><i style="left:336px;background:radial-gradient(rgba(201,202,79,0.95) 10%,rgba(201,202,79,0.55))"></i><i style="left:348px;background:radial-gradient(rgba(204,202,79,0.95) 10%,rgba(204,202,79,0.55))"></i><i style="left:360px;background:radial-gradient(rgba(206,202,78,0.95) 10%,rgba(206,202,78,0.55))"></i><i style="left:372px;background:radial-gradient(rgba(208,201,77,0.95) 10%,rgba(208,201,77,0.55))"></i><i style="left:384px;background:radial-gradient(rgba(210,201,77,0.95) 10%,rgba(210,201,77,0.55))"></i><i style="left:396px;background:radial-gradient(rgba(212,200,76,0.95) 10%,rgba(212,200,76,0.55))"></i><i style="left:408px;background:radial-gradient(rgba(214,199,76,0.95) 10%,rgba(214,199,76,0.55))"></i><i style="left:420px;background:radial-gradient(rgba(216,198,75,0.95) 10%,rgba(216,198,75,0.55))"></i><i style="left:432px;background:radial-gradient(rgba(217,197,75,0.95) 10%,rgba(217,197,75,0.55))"></i><i style="left:444px;background:radial-gradient(rgba(219,196,74,0.95) 10%,rgba(219,196,74,0.55))"></i><i style="left:456px;background:radial-gradient(rgba(220,195,74,0.95) 10%,rgba(220,195,74,0.55))"></i><i style="left:468px;background:radial-gradient(rgba(222,194,74,0.95) 10%,rgba(222,194,74,0.55))"></i><i style="left:480px;background:radial-gradient(rgba(223,193,74,0.95) 10%,rgba(223,193,74,0.55))"></i><i style="left:492px;background:radial-gradient(rgba(225,191,73,0.95) 10%,rgba(225,191,73,0.55))"></i><i style="left:504px;background:radial-gradient(rgba(226,190,73,0.95) 10%,rgba(226,190,73,0.55))"></i><i style="left:516px;background:radial-gradient(rgba(227,188,73,0.95) 10%,rgba(227,188,73,0.55))"></i><i style="left:528px;background:radial-gradient(rgba(228,186,73,0.95) 10%,rgba(228,186,73,0.55))"></i><i style="left:540px;background:radial-gradient(rgba(229,184,73,0.95) 10%,rgba(229,184,73,0.55))"></i><i style="left:552px;background:radial-gradient(rgba(230,182,73,0.95) 10%,rgba(230,182,73,0.55))"></i><i style="left:564px;background:radial-gradient(rgba(231,180,73,0.95) 10%,rgba(231,180,73,0.55))"></i><i style="left:576px;background:radial-gradient(rgba(232,178,73,0.95) 10%,rgba(232,178,73,0.55))"></i><i style="left:588px;background:radial-gradient(rgba(232,176,73,0.95) 10%,rgba(232,176,73,0.55))"></i><i style="left:600px;background:radial-gradient(rgba(233,173,73,0.95) 10%,rgba(233,173,73,0.55))"></i><i style="left:612px;background:radial-gradient(rgba(234,171,74,0.95) 10%,rgba(234,171,74,0.55))"></i><i style="left:624px;background:radial-gradient(rgba(234,169,74,0.95) 10%,rgba(234,169,74,0.55))"></i><i style="left:636px;background:radial-gradient(rgba(235,166,74,0.95) 10%,rgba(235,166,74,0.55))"></i><i style="left:648px;background:radial-gradient(rgba(235,163,74,0.95) 10%,rgba(235,163,74,0.55))"></i><i style="left:660px;background:radial-gradient(rgba(235,161,75,0.95) 10%,rgba(235,161,75,0.55))"></i><i style="left:672px;background:radial-gradient(rgba(236,158,75,0.95) 10%,rgba(236,158,75,0.55))"></i><i style="left:684px;background:radial-gradient(rgba(236,155,76,0.95) 10%,rgba(236,155,76,0.55))"></i><i style="left:696px;background:radial-gradient(rgba(236,152,76,0.95) 10%,rgba(236,152,76,0.55))"></i><i style="left:708px;background:radial-gradient(rgba(236,149,76,0.95) 10%,rgba(236,149,76,0.55))"></i><i style="left:720px;background:radial-gradient(rgba(236,146,77,0.95) 10%,rgba(236,146,77,0.55))"></i><i style="left:732px;background:radial-gradient(rgba(236,143,78,0.95) 10%,rgba(236,143,78,0.55))"></i><i style="left:744px;background:radial-gradient(rgba(236,140,78,0.95) 10%,rgba(236,140,78,0.55))"></i><i style="left:756px;background:radial-gradient(rgba(236,137,79,0.95) 10%,rgba(236,137,79,0.55))"></i><i style="left:768px;background:radial-gradient(rgba(236,134,80,0.95) 10%,rgba(236,134,80,0.55))"></i><i style="left:780px;background:radial-gradient(rgba(236,130,80,0.95) 10%,rgba(236,130,80,0.55))"></i><i style="left:792px;background:radial-gradient(rgba(236,127,81,0.95) 10%,rgba(236,127,81,0.55))"></i><i style="left:804px;background:radial-gradient(rgba(236,124,82,0.95) 10%,rgba(236,124,82,0.55))"></i><i style="left:816px;background:radial-gradient(rgba(236,120,83,0.95) 10%,rgba(236,120,83,0.55))"></i><i style="left:828px;background:radial-gradient(rgba(236,117,83,0.95) 10%,rgba(236,117,83,0.55))"></i><i style="left:840px;background:radial-gradient(rgba(235,114,84,0.95) 10%,rgba(235,114,84,0.55))"></i><i style="left:852px;background:radial-gradient(rgba(235,110,85,0.95) 10%,rgba(235,110,85,0.55))"></i><i style="left:864px;background:radial-gradient(rgba(235,107,86,0.95) 10%,rgba(235,107,86,0.55))"></i><i style="left:876px;background:radial-gradient(rgba(235,104,87,0.95) 10%,rgba(235,104,87,0.55))"></i><i style="left:888px;background:radial-gradient(rgba(234,100,88,0.95) 10%,rgba(234,100,88,0.55))"></i><i style="left:900px;background:radial-gradient(rgba(234,97,89,0.95) 10%,rgba(234,97,89,0.55))"></i><i style="left:912px;background:radial-gradient(rgba(234,93,90,0.95) 10%,rgba(234,93,90,0.55))"></i><i style="left:924px;background:radial-gradient(rgba(234,90,91,0.95) 10%,rgba(234,90,91,0.55))"></i><i style="left:936px;background:radial-gradient(rgba(233,86,92,0.95) 10%,rgba(233,86,92,0.55))"></i><i style="left:948px;background:radial-gradient(rgba(233,83,93,0.95) 10%,rgba(233,83,93,0.55))"></i></div>
<span class="t" style="left:1212.50px;top:52px;font-size:28.6px;letter-spacing:-1.413px;color:rgb(233,80,94);-webkit-text-stroke:0.45px currentColor;">99</span>
<span class="t" style="left:39.00px;top:74px;font-size:13px;letter-spacing:0.067px;-webkit-text-stroke:0.2px currentColor;">"Wallace Beery"</span>
<div class="row" style="top:97px;height:27px;"><i style="left:0px;background:radial-gradient(rgba(124,190,110,0.95) 10%,rgba(124,190,110,0.55))"></i><i style="left:12px;background:radial-gradient(rgba(127,191,108,0.95) 10%,rgba(127,191,108,0.55))"></i><i style="left:24px;background:radial-gradient(rgba(130,192,107,0.95) 10%,rgba(130,192,107,0.55))"></i><i style="left:36px;background:radial-gradient(rgba(133,192,106,0.95) 10%,rgba(133,192,106,0.55))"></i><i style="left:48px;background:radial-gradient(rgba(136,193,104,0.95) 10%,rgba(136,193,104,0.55))"></i><i style="left:60px;background:radial-gradient(rgba(139,194,103,0.95) 10%,rgba(139,194,103,0.55))"></i><i style="left:72px;background:radial-gradient(rgba(142,195,102,0.95) 10%,rgba(142,195,102,0.55))"></i><i style="left:84px;background:radial-gradient(rgba(145,195,100,0.95) 10%,rgba(145,195,100,0.55))"></i><i style="left:96px;background:radial-gradient(rgba(148,196,99,0.95) 10%,rgba(148,196,99,0.55))"></i><i style="left:108px;background:radial-gradient(rgba(151,197,98,0.95) 10%,rgba(151,197,98,0.55))"></i><i style="left:120px;background:radial-gradient(rgba(154,198,97,0.95) 10%,rgba(154,198,97,0.55))"></i><i style="left:132px;background:radial-gradient(rgba(156,198,96,0.95) 10%,rgba(156,198,96,0.55))"></i><i style="left:144px;background:radial-gradient(rgba(159,199,94,0.95) 10%,rgba(159,199,94,0.55))"></i><i style="left:156px;background:radial-gradient(rgba(162,199,93,0.95) 10%,rgba(162,199,93,0.55))"></i><i style="left:168px;background:radial-gradient(rgba(165,200,92,0.95) 10%,rgba(165,200,92,0.55))"></i><i style="left:180px;background:radial-gradient(rgba(168,201,91,0.95) 10%,rgba(168,201,91,0.55))"></i><i style="left:192px;background:radial-gradient(rgba(171,201,90,0.95) 10%,rgba(171,201,90,0.55))"></i><i style="left:204px;background:radial-gradient(rgba(174,201,89,0.95) 10%,rgba(174,201,89,0.55))"></i><i style="left:216px;background:radial-gradient(rgba(176,202,88,0.95) 10%,rgba(176,202,88,0.55))"></i><i style="left:228px;background:radial-gradient(rgba(179,202,87,0.95) 10%,rgba(179,202,87,0.55))"></i><i style="left:240px;background:radial-gradient(rgba(182,202,86,0.95) 10%,rgba(182,202,86,0.55))"></i><i style="left:252px;background:radial-gradient(rgba(184,203,85,0.95) 10%,rgba(184,203,85,0.55))"></i><i style="left:264px;background:radial-gradient(rgba(187,203,84,0.95) 10%,rgba(187,203,84,0.55))"></i><i style="left:276px;background:radial-gradient(rgba(189,203,83,0.95) 10%,rgba(189,203,83,0.55))"></i><i style="left:288px;background:radial-gradient(rgba(192,203,82,0.95) 10%,rgba(192,203,82,0.55))"></i><i style="left:300px;background:radial-gradient(rgba(194,203,81,0.95) 10%,rgba(194,203,81,0.55))"></i><i style="left:312px;background:radial-gradient(rgba(197,203,81,0.95) 10%,rgba(197,203,81,0.55))"></i><i style="left:324px;background:radial-gradient(rgba(199,203,80,0.95) 10%,rgba(199,203,80,0.55))"></i><i style="left:336px;background:radial-gradient(rgba(201,202,79,0.95) 10%,rgba(201,202,79,0.55))"></i><i style="left:348px;background:radial-gradient(rgba(204,202,79,0.95) 10%,rgba(204,202,79,0.55))"></i><i style="left:360px;background:radial-gradient(rgba(206,202,78,0.95) 10%,rgba(206,202,78,0.55))"></i><i style="left:372px;background:radial-gradient(rgba(208,201,77,0.95) 10%,rgba(208,201,77,0.55))"></i><i style="left:384px;background:radial-gradient(rgba(210,201,77,0.95) 10%,rgba(210,201,77,0.55))"></i><i style="left:396px;background:radial-gradient(rgba(212,200,76,0.95) 10%,rgba(212,200,76,0.55))"></i><i style="left:408px;background:radial-gradient(rgba(214,199,76,0.95) 10%,rgba(214,199,76,0.55))"></i><i style="left:420px;background:radial-gradient(rgba(216,198,75,0.95) 10%,rgba(216,198,75,0.55))"></i><i style="left:432px;background:radial-gradient(rgba(217,197,75,0.95) 10%,rgba(217,197,75,0.55))"></i><i style="left:444px;background:radial-gradient(rgba(219,196,74,0.95) 10%,rgba(219,196,74,0.55))"></i><i style="left:456px;background:radial-gradient(rgba(220,195,74,0.95) 10%,rgba(220,195,74,0.55))"></i><i style="left:468px;background:radial-gradient(rgba(222,194,74,0.95) 10%,rgba(222,194,74,0.55))"></i><i style="left:480px;background:radial-gradient(rgba(223,193,74,0.95) 10%,rgba(223,193,74,0.55))"></i><i style="left:492px;background:radial-gradient(rgba(225,191,73,0.95) 10%,rgba(225,191,73,0.55))"></i><i style="left:504px;background:radial-gradient(rgba(226,190,73,0.95) 10%,rgba(226,190,73,0.55))"></i><i style="left:516px;background:radial-gradient(rgba(227,188,73,0.95) 10%,rgba(227,188,73,0.55))"></i><i style="left:528px;background:radial-gradient(rgba(228,186,73,0.95) 10%,rgba(228,186,73,0.55))"></i><i style="left:540px;background:radial-gradient(rgba(229,184,73,0.95) 10%,rgba(229,184,73,0.55))"></i><i style="left:552px;background:radial-gradient(rgba(230,182,73,0.95) 10%,rgba(230,182,73,0.55))"></i><i style="left:564px;background:radial-gradient(rgba(231,180,73,0.95) 10%,rgba(231,180,73,0.55))"></i><i style="left:576px;background:radial-gradient(rgba(232,178,73,0.95) 10%,rgba(232,178,73,0.55))"></i><i style="left:588px;background:radial-gradient(rgba(232,176,73,0.95) 10%,rgba(232,176,73,0.55))"></i><i style="left:600px;background:radial-gradient(rgba(233,173,73,0.95) 10%,rgba(233,173,73,0.55))"></i><i style="left:612px;background:radial-gradient(rgba(234,171,74,0.95) 10%,rgba(234,171,74,0.55))"></i><i style="left:624px;background:radial-gradient(rgba(234,169,74,0.95) 10%,rgba(234,169,74,0.55))"></i><i style="left:636px;background:radial-gradient(rgba(235,166,74,0.95) 10%,rgba(235,166,74,0.55))"></i><i style="left:648px;background:radial-gradient(rgba(235,163,74,0.95) 10%,rgba(235,163,74,0.55))"></i><i style="left:660px;background:radial-gradient(rgba(235,161,75,0.95) 10%,rgba(235,161,75,0.55))"></i><i style="left:672px;background:radial-gradient(rgba(236,158,75,0.95) 10%,rgba(236,158,75,0.55))"></i><i style="left:684px;background:radial-gradient(rgba(236,155,76,0.95) 10%,rgba(236,155,76,0.55))"></i><i style="left:696px;background:radial-gradient(rgba(236,152,76,0.95) 10%,rgba(236,152,76,0.55))"></i><i style="left:708px;background:radial-gradient(rgba(236,149,76,0.95) 10%,rgba(236,149,76,0.55))"></i><i style="left:720px;background:radial-gradient(rgba(236,146,77,0.95) 10%,rgba(236,146,77,0.55))"></i><i style="left:732px;background:radial-gradient(rgba(236,143,78,0.95) 10%,rgba(236,143,78,0.55))"></i><i style="left:744px;background:radial-gradient(rgba(236,140,78,0.95) 10%,rgba(236,140,78,0.55))"></i><i style="left:756px;background:radial-gradient(rgba(236,137,79,0.95) 10%,rgba(236,137,79,0.55))"></i><i style="left:768px;background:radial-gradient(rgba(236,134,80,0.95) 10%,rgba(236,134,80,0.55))"></i><i style="left:780px;background:radial-gradient(rgba(236,130,80,0.95) 10%,rgba(236,130,80,0.55))"></i><i style="left:792px;background:radial-gradient(rgba(236,127,81,0.95) 10%,rgba(236,127,81,0.55))"></i><i style="left:804px;background:radial-gradient(rgba(236,124,82,0.95) 10%,rgba(236,124,82,0.55))"></i><i style="left:816px;background:radial-gradient(rgba(236,120,83,0.95) 10%,rgba(236,120,83,0.55))"></i><i style="left:828px;background:radial-gradient(rgba(236,117,83,0.95) 10%,rgba(236,117,83,0.55))"></i><i style="left:840px;background:radial-gradient(rgba(235,114,84,0.95) 10%,rgba(235,114,84,0.55))"></i><i style="left:852px;background:radial-gradient(rgba(235,110,85,0.95) 10%,rgba(235,110,85,0.55))"></i><i style="left:864px;background:radial-gradient(rgba(235,107,86,0.95) 10%,rgba(235,107,86,0.55))"></i><i style="left:876px;background:radial-gradient(rgba(235,104,87,0.95) 10%,rgba(235,104,87,0.55))"></i><i style="left:888px;background:radial-gradient(rgba(234,100,88,0.95) 10%,rgba(234,100,88,0.55))"></i><i style="left:900px;background:radial-gradient(rgba(234,97,89,0.95) 10%,rgba(234,97,89,0.55))"></i><i style="left:912px;background:radial-gradient(rgba(234,93,90,0.95) 10%,rgba(234,93,90,0.55))"></i><i style="left:924px;background:radial-gradient(rgba(234,90,91,0.95) 10%,rgba(234,90,91,0.55))"></i><i style="left:936px;background:radial-gradient(rgba(233,86,92,0.95) 10%,rgba(233,86,92,0.55))"></i><i style="left:948px;background:radial-gradient(rgba(233,83,93,0.95) 10%,rgba(233,83,93,0.55))"></i></div>
<span class="t" style="left:1212.50px;top:81px;font-size:28.6px;letter-spacing:-1.413px;color:rgb(233,80,94);-webkit-text-stroke:0.45px currentColor;">99</span>
<span class="t" style="left:56.00px;top:103px;font-size:13px;letter-spacing:0.138px;-webkit-text-stroke:0.2px currentColor;">"Mel Gibson"</span>
<div class="row" style="top:126px;height:26px;"><i style="left:0px;background:radial-gradient(rgba(124,190,110,0.95) 10%,rgba(124,190,110,0.55))"></i><i style="left:12px;background:radial-gradient(rgba(127,191,108,0.95) 10%,rgba(127,191,108,0.55))"></i><i style="left:24px;background:radial-gradient(rgba(130,192,107,0.95) 10%,rgba(130,192,107,0.55))"></i><i style="left:36px;background:radial-gradient(rgba(133,192,106,0.95) 10%,rgba(133,192,106,0.55))"></i><i style="left:48px;background:radial-gradient(rgba(136,193,104,0.95) 10%,rgba(136,193,104,0.55))"></i><i style="left:60px;background:radial-gradient(rgba(139,194,103,0.95) 10%,rgba(139,194,103,0.55))"></i><i style="left:72px;background:radial-gradient(rgba(142,195,102,0.95) 10%,rgba(142,195,102,0.55))"></i><i style="left:84px;background:radial-gradient(rgba(145,195,100,0.95) 10%,rgba(145,195,100,0.55))"></i><i style="left:96px;background:radial-gradient(rgba(148,196,99,0.95) 10%,rgba(148,196,99,0.55))"></i><i style="left:108px;background:radial-gradient(rgba(151,197,98,0.95) 10%,rgba(151,197,98,0.55))"></i><i style="left:120px;background:radial-gradient(rgba(154,198,97,0.95) 10%,rgba(154,198,97,0.55))"></i><i style="left:132px;background:radial-gradient(rgba(156,198,96,0.95) 10%,rgba(156,198,96,0.55))"></i><i style="left:144px;background:radial-gradient(rgba(159,199,94,0.95) 10%,rgba(159,199,94,0.55))"></i><i style="left:156px;background:radial-gradient(rgba(162,199,93,0.95) 10%,rgba(162,199,93,0.55))"></i><i style="left:168px;background:radial-gradient(rgba(165,200,92,0.95) 10%,rgba(165,200,92,0.55))"></i><i style="left:180px;background:radial-gradient(rgba(168,201,91,0.95) 10%,rgba(168,201,91,0.55))"></i><i style="left:192px;background:radial-gradient(rgba(171,201,90,0.95) 10%,rgba(171,201,90,0.55))"></i><i style="left:204px;background:radial-gradient(rgba(174,201,89,0.95) 10%,rgba(174,201,89,0.55))"></i><i style="left:216px;background:radial-gradient(rgba(176,202,88,0.95) 10%,rgba(176,202,88,0.55))"></i><i style="left:228px;background:radial-gradient(rgba(179,202,87,0.95) 10%,rgba(179,202,87,0.55))"></i><i style="left:240px;background:radial-gradient(rgba(182,202,86,0.95) 10%,rgba(182,202,86,0.55))"></i><i style="left:252px;background:radial-gradient(rgba(184,203,85,0.95) 10%,rgba(184,203,85,0.55))"></i><i style="left:264px;background:radial-gradient(rgba(187,203,84,0.95) 10%,rgba(187,203,84,0.55))"></i><i style="left:276px;background:radial-gradient(rgba(189,203,83,0.95) 10%,rgba(189,203,83,0.55))"></i><i style="left:288px;background:radial-gradient(rgba(192,203,82,0.95) 10%,rgba(192,203,82,0.55))"></i><i style="left:300px;background:radial-gradient(rgba(194,203,81,0.95) 10%,rgba(194,203,81,0.55))"></i><i style="left:312px;background:radial-gradient(rgba(197,203,81,0.95) 10%,rgba(197,203,81,0.55))"></i><i style="left:324px;background:radial-gradient(rgba(199,203,80,0.95) 10%,rgba(199,203,80,0.55))"></i><i style="left:336px;background:radial-gradient(rgba(201,202,79,0.95) 10%,rgba(201,202,79,0.55))"></i><i style="left:348px;background:radial-gradient(rgba(204,202,79,0.95) 10%,rgba(204,202,79,0.55))"></i><i style="left:360px;background:radial-gradient(rgba(206,202,78,0.95) 10%,rgba(206,202,78,0.55))"></i><i style="left:372px;background:radial-gradient(rgba(208,201,77,0.95) 10%,rgba(208,201,77,0.55))"></i><i style="left:384px;background:radial-gradient(rgba(210,201,77,0.95) 10%,rgba(210,201,77,0.55))"></i><i style="left:396px;background:radial-gradient(rgba(212,200,76,0.95) 10%,rgba(212,200,76,0.55))"></i><i style="left:408px;background:radial-gradient(rgba(214,199,76,0.95) 10%,rgba(214,199,76,0.55))"></i><i style="left:420px;background:radial-gradient(rgba(216,198,75,0.95) 10%,rgba(216,198,75,0.55))"></i><i style="left:432px;background:radial-gradient(rgba(217,197,75,0.95) 10%,rgba(217,197,75,0.55))"></i><i style="left:444px;background:radial-gradient(rgba(219,196,74,0.95) 10%,rgba(219,196,74,0.55))"></i><i style="left:456px;background:radial-gradient(rgba(220,195,74,0.95) 10%,rgba(220,195,74,0.55))"></i><i style="left:468px;background:radial-gradient(rgba(222,194,74,0.95) 10%,rgba(222,194,74,0.55))"></i><i style="left:480px;background:radial-gradient(rgba(223,193,74,0.95) 10%,rgba(223,193,74,0.55))"></i><i style="left:492px;background:rgba(225,191,73,0.18)"></i><i style="left:504px;background:rgba(226,190,73,0.18)"></i><i style="left:516px;background:rgba(227,188,73,0.18)"></i><i style="left:528px;background:rgba(228,186,73,0.18)"></i><i style="left:540px;background:rgba(229,184,73,0.18)"></i><i style="left:552px;background:rgba(230,182,73,0.18)"></i><i style="left:564px;background:rgba(231,180,73,0.18)"></i><i style="left:576px;background:rgba(232,178,73,0.18)"></i><i style="left:588px;background:rgba(232,176,73,0.18)"></i><i style="left:600px;background:rgba(233,173,73,0.18)"></i><i style="left:612px;background:rgba(234,171,74,0.18)"></i><i style="left:624px;background:rgba(234,169,74,0.18)"></i><i style="left:636px;background:rgba(235,166,74,0.18)"></i><i style="left:648px;background:rgba(235,163,74,0.18)"></i><i style="left:660px;background:rgba(235,161,75,0.18)"></i><i style="left:672px;background:rgba(236,158,75,0.18)"></i><i style="left:684px;background:rgba(236,155,76,0.18)"></i><i style="left:696px;background:rgba(236,152,76,0.18)"></i><i style="left:708px;background:rgba(236,149,76,0.18)"></i><i style="left:720px;background:rgba(236,146,77,0.18)"></i><i style="left:732px;background:rgba(236,143,78,0.18)"></i><i style="left:744px;background:rgba(236,140,78,0.18)"></i><i style="left:756px;background:rgba(236,137,79,0.18)"></i><i style="left:768px;background:rgba(236,134,80,0.18)"></i><i style="left:780px;background:rgba(236,130,80,0.18)"></i><i style="left:792px;background:rgba(236,127,81,0.18)"></i><i style="left:804px;background:rgba(236,124,82,0.18)"></i><i style="left:816px;background:rgba(236,120,83,0.18)"></i><i style="left:828px;background:rgba(236,117,83,0.18)"></i><i style="left:840px;background:rgba(235,114,84,0.18)"></i><i style="left:852px;background:rgba(235,110,85,0.18)"></i><i style="left:864px;background:rgba(235,107,86,0.18)"></i><i style="left:876px;background:rgba(235,104,87,0.18)"></i><i style="left:888px;background:rgba(234,100,88,0.18)"></i><i style="left:900px;background:rgba(234,97,89,0.18)"></i><i style="left:912px;background:rgba(234,93,90,0.18)"></i><i style="left:924px;background:rgba(234,90,91,0.18)"></i><i style="left:936px;background:rgba(233,86,92,0.18)"></i><i style="left:948px;background:rgba(233,83,93,0.18)"></i></div>
<span class="t" style="left:1212.50px;top:109px;font-size:28.6px;letter-spacing:-1.413px;color:rgb(223,193,74);-webkit-text-stroke:0.45px currentColor;">98</span>
<span class="t" style="left:10.00px;top:131px;font-size:13px;letter-spacing:0.056px;-webkit-text-stroke:0.2px currentColor;">"Denzel Washington"</span>
<div class="row" style="top:154px;height:27px;"><i style="left:0px;background:radial-gradient(rgba(124,190,110,0.95) 10%,rgba(124,190,110,0.55))"></i><i style="left:12px;background:radial-gradient(rgba(127,191,108,0.95) 10%,rgba(127,191,108,0.55))"></i><i style="left:24px;background:radial-gradient(rgba(130,192,107,0.95) 10%,rgba(130,192,107,0.55))"></i><i style="left:36px;background:radial-gradient(rgba(133,192,106,0.95) 10%,rgba(133,192,106,0.55))"></i><i style="left:48px;background:radial-gradient(rgba(136,193,104,0.95) 10%,rgba(136,193,104,0.55))"></i><i style="left:60px;background:radial-gradient(rgba(139,194,103,0.95) 10%,rgba(139,194,103,0.55))"></i><i style="left:72px;background:radial-gradient(rgba(142,195,102,0.95) 10%,rgba(142,195,102,0.55))"></i><i style="left:84px;background:radial-gradient(rgba(145,195,100,0.95) 10%,rgba(145,195,100,0.55))"></i><i style="left:96px;background:radial-gradient(rgba(148,196,99,0.95) 10%,rgba(148,196,99,0.55))"></i><i style="left:108px;background:radial-gradient(rgba(151,197,98,0.95) 10%,rgba(151,197,98,0.55))"></i><i style="left:120px;background:radial-gradient(rgba(154,198,97,0.95) 10%,rgba(154,198,97,0.55))"></i><i style="left:132px;background:radial-gradient(rgba(156,198,96,0.95) 10%,rgba(156,198,96,0.55))"></i><i style="left:144px;background:radial-gradient(rgba(159,199,94,0.95) 10%,rgba(159,199,94,0.55))"></i><i style="left:156px;background:radial-gradient(rgba(162,199,93,0.95) 10%,rgba(162,199,93,0.55))"></i><i style="left:168px;background:radial-gradient(rgba(165,200,92,0.95) 10%,rgba(165,200,92,0.55))"></i><i style="left:180px;background:radial-gradient(rgba(168,201,91,0.95) 10%,rgba(168,201,91,0.55))"></i><i style="left:192px;background:radial-gradient(rgba(171,201,90,0.95) 10%,rgba(171,201,90,0.55))"></i><i style="left:204px;background:radial-gradient(rgba(174,201,89,0.95) 10%,rgba(174,201,89,0.55))"></i><i style="left:216px;background:radial-gradient(rgba(176,202,88,0.95) 10%,rgba(176,202,88,0.55))"></i><i style="left:228px;background:radial-gradient(rgba(179,202,87,0.95) 10%,rgba(179,202,87,0.55))"></i><i style="left:240px;background:radial-gradient(rgba(182,202,86,0.95) 10%,rgba(182,202,86,0.55))"></i><i style="left:252px;background:radial-gradient(rgba(184,203,85,0.95) 10%,rgba(184,203,85,0.55))"></i><i style="left:264px;background:radial-gradient(rgba(187,203,84,0.95) 10%,rgba(187,203,84,0.55))"></i><i style="left:276px;background:radial-gradient(rgba(189,203,83,0.95) 10%,rgba(189,203,83,0.55))"></i><i style="left:288px;background:radial-gradient(rgba(192,203,82,0.95) 10%,rgba(192,203,82,0.55))"></i><i style="left:300px;background:radial-gradient(rgba(194,203,81,0.95) 10%,rgba(194,203,81,0.55))"></i><i style="left:312px;background:radial-gradient(rgba(197,203,81,0.95) 10%,rgba(197,203,81,0.55))"></i><i style="left:324px;background:radial-gradient(rgba(199,203,80,0.95) 10%,rgba(199,203,80,0.55))"></i><i style="left:336px;background:radial-gradient(rgba(201,202,79,0.95) 10%,rgba(201,202,79,0.55))"></i><i style="left:348px;background:radial-gradient(rgba(204,202,79,0.95) 10%,rgba(204,202,79,0.55))"></i><i style="left:360px;background:radial-gradient(rgba(206,202,78,0.95) 10%,rgba(206,202,78,0.55))"></i><i style="left:372px;background:radial-gradient(rgba(208,201,77,0.95) 10%,rgba(208,201,77,0.55))"></i><i style="left:384px;background:radial-gradient(rgba(210,201,77,0.95) 10%,rgba(210,201,77,0.55))"></i><i style="left:396px;background:radial-gradient(rgba(212,200,76,0.95) 10%,rgba(212,200,76,0.55))"></i><i style="left:408px;background:radial-gradient(rgba(214,199,76,0.95) 10%,rgba(214,199,76,0.55))"></i><i style="left:420px;background:radial-gradient(rgba(216,198,75,0.95) 10%,rgba(216,198,75,0.55))"></i><i style="left:432px;background:radial-gradient(rgba(217,197,75,0.95) 10%,rgba(217,197,75,0.55))"></i><i style="left:444px;background:radial-gradient(rgba(219,196,74,0.95) 10%,rgba(219,196,74,0.55))"></i><i style="left:456px;background:radial-gradient(rgba(220,195,74,0.95) 10%,rgba(220,195,74,0.55))"></i><i style="left:468px;background:radial-gradient(rgba(222,194,74,0.95) 10%,rgba(222,194,74,0.55))"></i><i style="left:480px;background:radial-gradient(rgba(223,193,74,0.95) 10%,rgba(223,193,74,0.55))"></i><i style="left:492px;background:rgba(225,191,73,0.18)"></i><i style="left:504px;background:rgba(226,190,73,0.18)"></i><i style="left:516px;background:rgba(227,188,73,0.18)"></i><i style="left:528px;background:rgba(228,186,73,0.18)"></i><i style="left:540px;background:rgba(229,184,73,0.18)"></i><i style="left:552px;background:rgba(230,182,73,0.18)"></i><i style="left:564px;background:rgba(231,180,73,0.18)"></i><i style="left:576px;background:rgba(232,178,73,0.18)"></i><i style="left:588px;background:rgba(232,176,73,0.18)"></i><i style="left:600px;background:rgba(233,173,73,0.18)"></i><i style="left:612px;background:rgba(234,171,74,0.18)"></i><i style="left:624px;background:rgba(234,169,74,0.18)"></i><i style="left:636px;background:rgba(235,166,74,0.18)"></i><i style="left:648px;background:rgba(235,163,74,0.18)"></i><i style="left:660px;background:rgba(235,161,75,0.18)"></i><i style="left:672px;background:rgba(236,158,75,0.18)"></i><i style="left:684px;background:rgba(236,155,76,0.18)"></i><i style="left:696px;background:rgba(236,152,76,0.18)"></i><i style="left:708px;background:rgba(236,149,76,0.18)"></i><i style="left:720px;background:rgba(236,146,77,0.18)"></i><i style="left:732px;background:rgba(236,143,78,0.18)"></i><i style="left:744px;background:rgba(236,140,78,0.18)"></i><i style="left:756px;background:rgba(236,137,79,0.18)"></i><i style="left:768px;background:rgba(236,134,80,0.18)"></i><i style="left:780px;background:rgba(236,130,80,0.18)"></i><i style="left:792px;background:rgba(236,127,81,0.18)"></i><i style="left:804px;background:rgba(236,124,82,0.18)"></i><i style="left:816px;background:rgba(236,120,83,0.18)"></i><i style="left:828px;background:rgba(236,117,83,0.18)"></i><i style="left:840px;background:rgba(235,114,84,0.18)"></i><i style="left:852px;background:rgba(235,110,85,0.18)"></i><i style="left:864px;background:rgba(235,107,86,0.18)"></i><i style="left:876px;background:rgba(235,104,87,0.18)"></i><i style="left:888px;background:rgba(234,100,88,0.18)"></i><i style="left:900px;background:rgba(234,97,89,0.18)"></i><i style="left:912px;background:rgba(234,93,90,0.18)"></i><i style="left:924px;background:rgba(234,90,91,0.18)"></i><i style="left:936px;background:rgba(233,86,92,0.18)"></i><i style="left:948px;background:rgba(233,83,93,0.18)"></i></div>
<span class="t" style="left:1212.50px;top:138px;font-size:28.6px;letter-spacing:-1.413px;color:rgb(223,193,74);-webkit-text-stroke:0.45px currentColor;">98</span>
<span class="t" style="left:31.50px;top:160px;font-size:13px;letter-spacing:0.160px;-webkit-text-stroke:0.2px currentColor;">"Dustin Hoffman"</span>
<div class="row" style="top:183px;height:27px;"><i style="left:0px;background:radial-gradient(rgba(124,190,110,0.95) 10%,rgba(124,190,110,0.55))"></i><i style="left:12px;background:radial-gradient(rgba(127,191,108,0.95) 10%,rgba(127,191,108,0.55))"></i><i style="left:24px;background:radial-gradient(rgba(130,192,107,0.95) 10%,rgba(130,192,107,0.55))"></i><i style="left:36px;background:radial-gradient(rgba(133,192,106,0.95) 10%,rgba(133,192,106,0.55))"></i><i style="left:48px;background:radial-gradient(rgba(136,193,104,0.95) 10%,rgba(136,193,104,0.55))"></i><i style="left:60px;background:radial-gradient(rgba(139,194,103,0.95) 10%,rgba(139,194,103,0.55))"></i><i style="left:72px;background:radial-gradient(rgba(142,195,102,0.95) 10%,rgba(142,195,102,0.55))"></i><i style="left:84px;background:radial-gradient(rgba(145,195,100,0.95) 10%,rgba(145,195,100,0.55))"></i><i style="left:96px;background:radial-gradient(rgba(148,196,99,0.95) 10%,rgba(148,196,99,0.55))"></i><i style="left:108px;background:radial-gradient(rgba(151,197,98,0.95) 10%,rgba(151,197,98,0.55))"></i><i style="left:120px;background:radial-gradient(rgba(154,198,97,0.95) 10%,rgba(154,198,97,0.55))"></i><i style="left:132px;background:radial-gradient(rgba(156,198,96,0.95) 10%,rgba(156,198,96,0.55))"></i><i style="left:144px;background:radial-gradient(rgba(159,199,94,0.95) 10%,rgba(159,199,94,0.55))"></i><i style="left:156px;background:radial-gradient(rgba(162,199,93,0.95) 10%,rgba(162,199,93,0.55))"></i><i style="left:168px;background:radial-gradient(rgba(165,200,92,0.95) 10%,rgba(165,200,92,0.55))"></i><i style="left:180px;background:radial-gradient(rgba(168,201,91,0.95) 10%,rgba(168,201,91,0.55))"></i><i style="left:192px;background:radial-gradient(rgba(171,201,90,0.95) 10%,rgba(171,201,90,0.55))"></i><i style="left:204px;background:radial-gradient(rgba(174,201,89,0.95) 10%,rgba(174,201,89,0.55))"></i><i style="left:216px;background:radial-gradient(rgba(176,202,88,0.95) 10%,rgba(176,202,88,0.55))"></i><i style="left:228px;background:radial-gradient(rgba(179,202,87,0.95) 10%,rgba(179,202,87,0.55))"></i><i style="left:240px;background:radial-gradient(rgba(182,202,86,0.95) 10%,rgba(182,202,86,0.55))"></i><i style="left:252px;background:radial-gradient(rgba(184,203,85,0.95) 10%,rgba(184,203,85,0.55))"></i><i style="left:264px;background:radial-gradient(rgba(187,203,84,0.95) 10%,rgba(187,203,84,0.55))"></i><i style="left:276px;background:radial-gradient(rgba(189,203,83,0.95) 10%,rgba(189,203,83,0.55))"></i><i style="left:288px;background:radial-gradient(rgba(192,203,82,0.95) 10%,rgba(192,203,82,0.55))"></i><i style="left:300px;background:radial-gradient(rgba(194,203,81,0.95) 10%,rgba(194,203,81,0.55))"></i><i style="left:312px;background:radial-gradient(rgba(197,203,81,0.95) 10%,rgba(197,203,81,0.55))"></i><i style="left:324px;background:radial-gradient(rgba(199,203,80,0.95) 10%,rgba(199,203,80,0.55))"></i><i style="left:336px;background:radial-gradient(rgba(201,202,79,0.95) 10%,rgba(201,202,79,0.55))"></i><i style="left:348px;background:radial-gradient(rgba(204,202,79,0.95) 10%,rgba(204,202,79,0.55))"></i><i style="left:360px;background:radial-gradient(rgba(206,202,78,0.95) 10%,rgba(206,202,78,0.55))"></i><i style="left:372px;background:radial-gradient(rgba(208,201,77,0.95) 10%,rgba(208,201,77,0.55))"></i><i style="left:384px;background:radial-gradient(rgba(210,201,77,0.95) 10%,rgba(210,201,77,0.55))"></i><i style="left:396px;background:radial-gradient(rgba(212,200,76,0.95) 10%,rgba(212,200,76,0.55))"></i><i style="left:408px;background:radial-gradient(rgba(214,199,76,0.95) 10%,rgba(214,199,76,0.55))"></i><i style="left:420px;background:radial-gradient(rgba(216,198,75,0.95) 10%,rgba(216,198,75,0.55))"></i><i style="left:432px;background:radial-gradient(rgba(217,197,75,0.95) 10%,rgba(217,197,75,0.55))"></i><i style="left:444px;background:radial-gradient(rgba(219,196,74,0.95) 10%,rgba(219,196,74,0.55))"></i><i style="left:456px;background:radial-gradient(rgba(220,195,74,0.95) 10%,rgba(220,195,74,0.55))"></i><i style="left:468px;background:radial-gradient(rgba(222,194,74,0.95) 10%,rgba(222,194,74,0.55))"></i><i style="left:480px;background:radial-gradient(rgba(223,193,74,0.95) 10%,rgba(223,193,74,0.55))"></i><i style="left:492px;background:rgba(225,191,73,0.18)"></i><i style="left:504px;background:rgba(226,190,73,0.18)"></i><i style="left:516px;background:rgba(227,188,73,0.18)"></i><i style="left:528px;background:rgba(228,186,73,0.18)"></i><i style="left:540px;background:rgba(229,184,73,0.18)"></i><i style="left:552px;background:rgba(230,182,73,0.18)"></i><i style="left:564px;background:rgba(231,180,73,0.18)"></i><i style="left:576px;background:rgba(232,178,73,0.18)"></i><i style="left:588px;background:rgba(232,176,73,0.18)"></i><i style="left:600px;background:rgba(233,173,73,0.18)"></i><i style="left:612px;background:rgba(234,171,74,0.18)"></i><i style="left:624px;background:rgba(234,169,74,0.18)"></i><i style="left:636px;background:rgba(235,166,74,0.18)"></i><i style="left:648px;background:rgba(235,163,74,0.18)"></i><i style="left:660px;background:rgba(235,161,75,0.18)"></i><i style="left:672px;background:rgba(236,158,75,0.18)"></i><i style="left:684px;background:rgba(236,155,76,0.18)"></i><i style="left:696px;background:rgba(236,152,76,0.18)"></i><i style="left:708px;background:rgba(236,149,76,0.18)"></i><i style="left:720px;background:rgba(236,146,77,0.18)"></i><i style="left:732px;background:rgba(236,143,78,0.18)"></i><i style="left:744px;background:rgba(236,140,78,0.18)"></i><i style="left:756px;background:rgba(236,137,79,0.18)"></i><i style="left:768px;background:rgba(236,134,80,0.18)"></i><i style="left:780px;background:rgba(236,130,80,0.18)"></i><i style="left:792px;background:rgba(236,127,81,0.18)"></i><i style="left:804px;background:rgba(236,124,82,0.18)"></i><i style="left:816px;background:rgba(236,120,83,0.18)"></i><i style="left:828px;background:rgba(236,117,83,0.18)"></i><i style="left:840px;background:rgba(235,114,84,0.18)"></i><i style="left:852px;background:rgba(235,110,85,0.18)"></i><i style="left:864px;background:rgba(235,107,86,0.18)"></i><i style="left:876px;background:rgba(235,104,87,0.18)"></i><i style="left:888px;background:rgba(234,100,88,0.18)"></i><i style="left:900px;background:rgba(234,97,89,0.18)"></i><i style="left:912px;background:rgba(234,93,90,0.18)"></i><i style="left:924px;background:rgba(234,90,91,0.18)"></i><i style="left:936px;background:rgba(233,86,92,0.18)"></i><i style="left:948px;background:rgba(233,83,93,0.18)"></i></div>
<span class="t" style="left:1212.50px;top:166px;font-size:28.6px;letter-spacing:-1.413px;color:rgb(223,193,74);-webkit-text-stroke:0.45px currentColor;">98</span>
<span class="t" style="left:35.50px;top:189px;font-size:13px;letter-spacing:0.075px;-webkit-text-stroke:0.2px currentColor;">"Blanche Sweet"</span>
<div class="row" style="top:212px;height:26px;"><i style="left:0px;background:radial-gradient(rgba(124,190,110,0.95) 10%,rgba(124,190,110,0.55))"></i><i style="left:12px;background:rgba(127,191,108,0.18)"></i><i style="left:24px;background:rgba(130,192,107,0.18)"></i><i style="left:36px;background:rgba(133,192,106,0.18)"></i><i style="left:48px;background:rgba(136,193,104,0.18)"></i><i style="left:60px;background:rgba(139,194,103,0.18)"></i><i style="left:72px;background:rgba(142,195,102,0.18)"></i><i style="left:84px;background:rgba(145,195,100,0.18)"></i><i style="left:96px;background:rgba(148,196,99,0.18)"></i><i style="left:108px;background:rgba(151,197,98,0.18)"></i><i style="left:120px;background:rgba(154,198,97,0.18)"></i><i style="left:132px;background:rgba(156,198,96,0.18)"></i><i style="left:144px;background:rgba(159,199,94,0.18)"></i><i style="left:156px;background:rgba(162,199,93,0.18)"></i><i style="left:168px;background:rgba(165,200,92,0.18)"></i><i style="left:180px;background:rgba(168,201,91,0.18)"></i><i style="left:192px;background:rgba(171,201,90,0.18)"></i><i style="left:204px;background:rgba(174,201,89,0.18)"></i><i style="left:216px;background:rgba(176,202,88,0.18)"></i><i style="left:228px;background:rgba(179,202,87,0.18)"></i><i style="left:240px;background:rgba(182,202,86,0.18)"></i><i style="left:252px;background:rgba(184,203,85,0.18)"></i><i style="left:264px;background:rgba(187,203,84,0.18)"></i><i style="left:276px;background:rgba(189,203,83,0.18)"></i><i style="left:288px;background:rgba(192,203,82,0.18)"></i><i style="left:300px;background:rgba(194,203,81,0.18)"></i><i style="left:312px;background:rgba(197,203,81,0.18)"></i><i style="left:324px;background:rgba(199,203,80,0.18)"></i><i style="left:336px;background:rgba(201,202,79,0.18)"></i><i style="left:348px;background:rgba(204,202,79,0.18)"></i><i style="left:360px;background:rgba(206,202,78,0.18)"></i><i style="left:372px;background:rgba(208,201,77,0.18)"></i><i style="left:384px;background:rgba(210,201,77,0.18)"></i><i style="left:396px;background:rgba(212,200,76,0.18)"></i><i style="left:408px;background:rgba(214,199,76,0.18)"></i><i style="left:420px;background:rgba(216,198,75,0.18)"></i><i style="left:432px;background:rgba(217,197,75,0.18)"></i><i style="left:444px;background:rgba(219,196,74,0.18)"></i><i style="left:456px;background:rgba(220,195,74,0.18)"></i><i style="left:468px;background:rgba(222,194,74,0.18)"></i><i style="left:480px;background:rgba(223,193,74,0.18)"></i><i style="left:492px;background:rgba(225,191,73,0.18)"></i><i style="left:504px;background:rgba(226,190,73,0.18)"></i><i style="left:516px;background:rgba(227,188,73,0.18)"></i><i style="left:528px;background:rgba(228,186,73,0.18)"></i><i style="left:540px;background:rgba(229,184,73,0.18)"></i><i style="left:552px;background:rgba(230,182,73,0.18)"></i><i style="left:564px;background:rgba(231,180,73,0.18)"></i><i style="left:576px;background:rgba(232,178,73,0.18)"></i><i style="left:588px;background:rgba(232,176,73,0.18)"></i><i style="left:600px;background:rgba(233,173,73,0.18)"></i><i style="left:612px;background:rgba(234,171,74,0.18)"></i><i style="left:624px;background:rgba(234,169,74,0.18)"></i><i style="left:636px;background:rgba(235,166,74,0.18)"></i><i style="left:648px;background:rgba(235,163,74,0.18)"></i><i style="left:660px;background:rgba(235,161,75,0.18)"></i><i style="left:672px;background:rgba(236,158,75,0.18)"></i><i style="left:684px;background:rgba(236,155,76,0.18)"></i><i style="left:696px;background:rgba(236,152,76,0.18)"></i><i style="left:708px;background:rgba(236,149,76,0.18)"></i><i style="left:720px;background:rgba(236,146,77,0.18)"></i><i style="left:732px;background:rgba(236,143,78,0.18)"></i><i style="left:744px;background:rgba(236,140,78,0.18)"></i><i style="left:756px;background:rgba(236,137,79,0.18)"></i><i style="left:768px;background:rgba(236,134,80,0.18)"></i><i style="left:780px;background:rgba(236,130,80,0.18)"></i><i style="left:792px;background:rgba(236,127,81,0.18)"></i><i style="left:804px;background:rgba(236,124,82,0.18)"></i><i style="left:816px;background:rgba(236,120,83,0.18)"></i><i style="left:828px;background:rgba(236,117,83,0.18)"></i><i style="left:840px;background:rgba(235,114,84,0.18)"></i><i style="left:852px;background:rgba(235,110,85,0.18)"></i><i style="left:864px;background:rgba(235,107,86,0.18)"></i><i style="left:876px;background:rgba(235,104,87,0.18)"></i><i style="left:888px;background:rgba(234,100,88,0.18)"></i><i style="left:900px;background:rgba(234,97,89,0.18)"></i><i style="left:912px;background:rgba(234,93,90,0.18)"></i><i style="left:924px;background:rgba(234,90,91,0.18)"></i><i style="left:936px;background:rgba(233,86,92,0.18)"></i><i style="left:948px;background:rgba(233,83,93,0.18)"></i></div>
<span class="t" style="left:1212.50px;top:195px;font-size:28.6px;letter-spacing:-1.413px;color:rgb(124,190,110);-webkit-text-stroke:0.45px currentColor;">97</span>
<span class="t" style="left:29.50px;top:217px;font-size:13px;letter-spacing:0.134px;-webkit-text-stroke:0.2px currentColor;">"Robert Mitchum"</span>
<div class="row" style="top:240px;height:27px;"><i style="left:0px;background:radial-gradient(rgba(124,190,110,0.95) 10%,rgba(124,190,110,0.55))"></i><i style="left:12px;background:rgba(127,191,108,0.18)"></i><i style="left:24px;background:rgba(130,192,107,0.18)"></i><i style="left:36px;background:rgba(133,192,106,0.18)"></i><i style="left:48px;background:rgba(136,193,104,0.18)"></i><i style="left:60px;background:rgba(139,194,103,0.18)"></i><i style="left:72px;background:rgba(142,195,102,0.18)"></i><i style="left:84px;background:rgba(145,195,100,0.18)"></i><i style="left:96px;background:rgba(148,196,99,0.18)"></i><i style="left:108px;background:rgba(151,197,98,0.18)"></i><i style="left:120px;background:rgba(154,198,97,0.18)"></i><i style="left:132px;background:rgba(156,198,96,0.18)"></i><i style="left:144px;background:rgba(159,199,94,0.18)"></i><i style="left:156px;background:rgba(162,199,93,0.18)"></i><i style="left:168px;background:rgba(165,200,92,0.18)"></i><i style="left:180px;background:rgba(168,201,91,0.18)"></i><i style="left:192px;background:rgba(171,201,90,0.18)"></i><i style="left:204px;background:rgba(174,201,89,0.18)"></i><i style="left:216px;background:rgba(176,202,88,0.18)"></i><i style="left:228px;background:rgba(179,202,87,0.18)"></i><i style="left:240px;background:rgba(182,202,86,0.18)"></i><i style="left:252px;background:rgba(184,203,85,0.18)"></i><i style="left:264px;background:rgba(187,203,84,0.18)"></i><i style="left:276px;background:rgba(189,203,83,0.18)"></i><i style="left:288px;background:rgba(192,203,82,0.18)"></i><i style="left:300px;background:rgba(194,203,81,0.18)"></i><i style="left:312px;background:rgba(197,203,81,0.18)"></i><i style="left:324px;background:rgba(199,203,80,0.18)"></i><i style="left:336px;background:rgba(201,202,79,0.18)"></i><i style="left:348px;background:rgba(204,202,79,0.18)"></i><i style="left:360px;background:rgba(206,202,78,0.18)"></i><i style="left:372px;background:rgba(208,201,77,0.18)"></i><i style="left:384px;background:rgba(210,201,77,0.18)"></i><i style="left:396px;background:rgba(212,200,76,0.18)"></i><i style="left:408px;background:rgba(214,199,76,0.18)"></i><i style="left:420px;background:rgba(216,198,75,0.18)"></i><i style="left:432px;background:rgba(217,197,75,0.18)"></i><i style="left:444px;background:rgba(219,196,74,0.18)"></i><i style="left:456px;background:rgba(220,195,74,0.18)"></i><i style="left:468px;background:rgba(222,194,74,0.18)"></i><i style="left:480px;background:rgba(223,193,74,0.18)"></i><i style="left:492px;background:rgba(225,191,73,0.18)"></i><i style="left:504px;background:rgba(226,190,73,0.18)"></i><i style="left:516px;background:rgba(227,188,73,0.18)"></i><i style="left:528px;background:rgba(228,186,73,0.18)"></i><i style="left:540px;background:rgba(229,184,73,0.18)"></i><i style="left:552px;background:rgba(230,182,73,0.18)"></i><i style="left:564px;background:rgba(231,180,73,0.18)"></i><i style="left:576px;background:rgba(232,178,73,0.18)"></i><i style="left:588px;background:rgba(232,176,73,0.18)"></i><i style="left:600px;background:rgba(233,173,73,0.18)"></i><i style="left:612px;background:rgba(234,171,74,0.18)"></i><i style="left:624px;background:rgba(234,169,74,0.18)"></i><i style="left:636px;background:rgba(235,166,74,0.18)"></i><i style="left:648px;background:rgba(235,163,74,0.18)"></i><i style="left:660px;background:rgba(235,161,75,0.18)"></i><i style="left:672px;background:rgba(236,158,75,0.18)"></i><i style="left:684px;background:rgba(236,155,76,0.18)"></i><i style="left:696px;background:rgba(236,152,76,0.18)"></i><i style="left:708px;background:rgba(236,149,76,0.18)"></i><i style="left:720px;background:rgba(236,146,77,0.18)"></i><i style="left:732px;background:rgba(236,143,78,0.18)"></i><i style="left:744px;background:rgba(236,140,78,0.18)"></i><i style="left:756px;background:rgba(236,137,79,0.18)"></i><i style="left:768px;background:rgba(236,134,80,0.18)"></i><i style="left:780px;background:rgba(236,130,80,0.18)"></i><i style="left:792px;background:rgba(236,127,81,0.18)"></i><i style="left:804px;background:rgba(236,124,82,0.18)"></i><i style="left:816px;background:rgba(236,120,83,0.18)"></i><i style="left:828px;background:rgba(236,117,83,0.18)"></i><i style="left:840px;background:rgba(235,114,84,0.18)"></i><i style="left:852px;background:rgba(235,110,85,0.18)"></i><i style="left:864px;background:rgba(235,107,86,0.18)"></i><i style="left:876px;background:rgba(235,104,87,0.18)"></i><i style="left:888px;background:rgba(234,100,88,0.18)"></i><i style="left:900px;background:rgba(234,97,89,0.18)"></i><i style="left:912px;background:rgba(234,93,90,0.18)"></i><i style="left:924px;background:rgba(234,90,91,0.18)"></i><i style="left:936px;background:rgba(233,86,92,0.18)"></i><i style="left:948px;background:rgba(233,83,93,0.18)"></i></div>
<span class="t" style="left:1212.50px;top:223px;font-size:28.6px;letter-spacing:-1.413px;color:rgb(124,190,110);-webkit-text-stroke:0.45px currentColor;">97</span>
<span class="t" style="left:38.50px;top:246px;font-size:13px;letter-spacing:0.065px;-webkit-text-stroke:0.2px currentColor;">"William Powell"</span>
<div class="row" style="top:269px;height:26px;"><i style="left:0px;background:radial-gradient(rgba(124,190,110,0.95) 10%,rgba(124,190,110,0.55))"></i><i style="left:12px;background:rgba(127,191,108,0.18)"></i><i style="left:24px;background:rgba(130,192,107,0.18)"></i><i style="left:36px;background:rgba(133,192,106,0.18)"></i><i style="left:48px;background:rgba(136,193,104,0.18)"></i><i style="left:60px;background:rgba(139,194,103,0.18)"></i><i style="left:72px;background:rgba(142,195,102,0.18)"></i><i style="left:84px;background:rgba(145,195,100,0.18)"></i><i style="left:96px;background:rgba(148,196,99,0.18)"></i><i style="left:108px;background:rgba(151,197,98,0.18)"></i><i style="left:120px;background:rgba(154,198,97,0.18)"></i><i style="left:132px;background:rgba(156,198,96,0.18)"></i><i style="left:144px;background:rgba(159,199,94,0.18)"></i><i style="left:156px;background:rgba(162,199,93,0.18)"></i><i style="left:168px;background:rgba(165,200,92,0.18)"></i><i style="left:180px;background:rgba(168,201,91,0.18)"></i><i style="left:192px;background:rgba(171,201,90,0.18)"></i><i style="left:204px;background:rgba(174,201,89,0.18)"></i><i style="left:216px;background:rgba(176,202,88,0.18)"></i><i style="left:228px;background:rgba(179,202,87,0.18)"></i><i style="left:240px;background:rgba(182,202,86,0.18)"></i><i style="left:252px;background:rgba(184,203,85,0.18)"></i><i style="left:264px;background:rgba(187,203,84,0.18)"></i><i style="left:276px;background:rgba(189,203,83,0.18)"></i><i style="left:288px;background:rgba(192,203,82,0.18)"></i><i style="left:300px;background:rgba(194,203,81,0.18)"></i><i style="left:312px;background:rgba(197,203,81,0.18)"></i><i style="left:324px;background:rgba(199,203,80,0.18)"></i><i style="left:336px;background:rgba(201,202,79,0.18)"></i><i style="left:348px;background:rgba(204,202,79,0.18)"></i><i style="left:360px;background:rgba(206,202,78,0.18)"></i><i style="left:372px;background:rgba(208,201,77,0.18)"></i><i style="left:384px;background:rgba(210,201,77,0.18)"></i><i style="left:396px;background:rgba(212,200,76,0.18)"></i><i style="left:408px;background:rgba(214,199,76,0.18)"></i><i style="left:420px;background:rgba(216,198,75,0.18)"></i><i style="left:432px;background:rgba(217,197,75,0.18)"></i><i style="left:444px;background:rgba(219,196,74,0.18)"></i><i style="left:456px;background:rgba(220,195,74,0.18)"></i><i style="left:468px;background:rgba(222,194,74,0.18)"></i><i style="left:480px;background:rgba(223,193,74,0.18)"></i><i style="left:492px;background:rgba(225,191,73,0.18)"></i><i style="left:504px;background:rgba(226,190,73,0.18)"></i><i style="left:516px;background:rgba(227,188,73,0.18)"></i><i style="left:528px;background:rgba(228,186,73,0.18)"></i><i style="left:540px;background:rgba(229,184,73,0.18)"></i><i style="left:552px;background:rgba(230,182,73,0.18)"></i><i style="left:564px;background:rgba(231,180,73,0.18)"></i><i style="left:576px;background:rgba(232,178,73,0.18)"></i><i style="left:588px;background:rgba(232,176,73,0.18)"></i><i style="left:600px;background:rgba(233,173,73,0.18)"></i><i style="left:612px;background:rgba(234,171,74,0.18)"></i><i style="left:624px;background:rgba(234,169,74,0.18)"></i><i style="left:636px;background:rgba(235,166,74,0.18)"></i><i style="left:648px;background:rgba(235,163,74,0.18)"></i><i style="left:660px;background:rgba(235,161,75,0.18)"></i><i style="left:672px;background:rgba(236,158,75,0.18)"></i><i style="left:684px;background:rgba(236,155,76,0.18)"></i><i style="left:696px;background:rgba(236,152,76,0.18)"></i><i style="left:708px;background:rgba(236,149,76,0.18)"></i><i style="left:720px;background:rgba(236,146,77,0.18)"></i><i style="left:732px;background:rgba(236,143,78,0.18)"></i><i style="left:744px;background:rgba(236,140,78,0.18)"></i><i style="left:756px;background:rgba(236,137,79,0.18)"></i><i style="left:768px;background:rgba(236,134,80,0.18)"></i><i style="left:780px;background:rgba(236,130,80,0.18)"></i><i style="left:792px;background:rgba(236,127,81,0.18)"></i><i style="left:804px;background:rgba(236,124,82,0.18)"></i><i style="left:816px;background:rgba(236,120,83,0.18)"></i><i style="left:828px;background:rgba(236,117,83,0.18)"></i><i style="left:840px;background:rgba(235,114,84,0.18)"></i><i style="left:852px;background:rgba(235,110,85,0.18)"></i><i style="left:864px;background:rgba(235,107,86,0.18)"></i><i style="left:876px;background:rgba(235,104,87,0.18)"></i><i style="left:888px;background:rgba(234,100,88,0.18)"></i><i style="left:900px;background:rgba(234,97,89,0.18)"></i><i style="left:912px;background:rgba(234,93,90,0.18)"></i><i style="left:924px;background:rgba(234,90,91,0.18)"></i><i style="left:936px;background:rgba(233,86,92,0.18)"></i><i style="left:948px;background:rgba(233,83,93,0.18)"></i></div>
<span class="t" style="left:1212.50px;top:252px;font-size:28.6px;letter-spacing:-1.413px;color:rgb(124,190,110);-webkit-text-stroke:0.45px currentColor;">97</span>
<span class="t" style="left:72.50px;top:274px;font-size:13px;letter-spacing:0.091px;-webkit-text-stroke:0.2px currentColor;">"Brad Pitt"</span>
<div class="row" style="top:297px;height:27px;"><i style="left:0px;background:radial-gradient(rgba(124,190,110,0.95) 10%,rgba(124,190,110,0.55))"></i><i style="left:12px;background:rgba(127,191,108,0.18)"></i><i style="left:24px;background:rgba(130,192,107,0.18)"></i><i style="left:36px;background:rgba(133,192,106,0.18)"></i><i style="left:48px;background:rgba(136,193,104,0.18)"></i><i style="left:60px;background:rgba(139,194,103,0.18)"></i><i style="left:72px;background:rgba(142,195,102,0.18)"></i><i style="left:84px;background:rgba(145,195,100,0.18)"></i><i style="left:96px;background:rgba(148,196,99,0.18)"></i><i style="left:108px;background:rgba(151,197,98,0.18)"></i><i style="left:120px;background:rgba(154,198,97,0.18)"></i><i style="left:132px;background:rgba(156,198,96,0.18)"></i><i style="left:144px;background:rgba(159,199,94,0.18)"></i><i style="left:156px;background:rgba(162,199,93,0.18)"></i><i style="left:168px;background:rgba(165,200,92,0.18)"></i><i style="left:180px;background:rgba(168,201,91,0.18)"></i><i style="left:192px;background:rgba(171,201,90,0.18)"></i><i style="left:204px;background:rgba(174,201,89,0.18)"></i><i style="left:216px;background:rgba(176,202,88,0.18)"></i><i style="left:228px;background:rgba(179,202,87,0.18)"></i><i style="left:240px;background:rgba(182,202,86,0.18)"></i><i style="left:252px;background:rgba(184,203,85,0.18)"></i><i style="left:264px;background:rgba(187,203,84,0.18)"></i><i style="left:276px;background:rgba(189,203,83,0.18)"></i><i style="left:288px;background:rgba(192,203,82,0.18)"></i><i style="left:300px;background:rgba(194,203,81,0.18)"></i><i style="left:312px;background:rgba(197,203,81,0.18)"></i><i style="left:324px;background:rgba(199,203,80,0.18)"></i><i style="left:336px;background:rgba(201,202,79,0.18)"></i><i style="left:348px;background:rgba(204,202,79,0.18)"></i><i style="left:360px;background:rgba(206,202,78,0.18)"></i><i style="left:372px;background:rgba(208,201,77,0.18)"></i><i style="left:384px;background:rgba(210,201,77,0.18)"></i><i style="left:396px;background:rgba(212,200,76,0.18)"></i><i style="left:408px;background:rgba(214,199,76,0.18)"></i><i style="left:420px;background:rgba(216,198,75,0.18)"></i><i style="left:432px;background:rgba(217,197,75,0.18)"></i><i style="left:444px;background:rgba(219,196,74,0.18)"></i><i style="left:456px;background:rgba(220,195,74,0.18)"></i><i style="left:468px;background:rgba(222,194,74,0.18)"></i><i style="left:480px;background:rgba(223,193,74,0.18)"></i><i style="left:492px;background:rgba(225,191,73,0.18)"></i><i style="left:504px;background:rgba(226,190,73,0.18)"></i><i style="left:516px;background:rgba(227,188,73,0.18)"></i><i style="left:528px;background:rgba(228,186,73,0.18)"></i><i style="left:540px;background:rgba(229,184,73,0.18)"></i><i style="left:552px;background:rgba(230,182,73,0.18)"></i><i style="left:564px;background:rgba(231,180,73,0.18)"></i><i style="left:576px;background:rgba(232,178,73,0.18)"></i><i style="left:588px;background:rgba(232,176,73,0.18)"></i><i style="left:600px;background:rgba(233,173,73,0.18)"></i><i style="left:612px;background:rgba(234,171,74,0.18)"></i><i style="left:624px;background:rgba(234,169,74,0.18)"></i><i style="left:636px;background:rgba(235,166,74,0.18)"></i><i style="left:648px;background:rgba(235,163,74,0.18)"></i><i style="left:660px;background:rgba(235,161,75,0.18)"></i><i style="left:672px;background:rgba(236,158,75,0.18)"></i><i style="left:684px;background:rgba(236,155,76,0.18)"></i><i style="left:696px;background:rgba(236,152,76,0.18)"></i><i style="left:708px;background:rgba(236,149,76,0.18)"></i><i style="left:720px;background:rgba(236,146,77,0.18)"></i><i style="left:732px;background:rgba(236,143,78,0.18)"></i><i style="left:744px;background:rgba(236,140,78,0.18)"></i><i style="left:756px;background:rgba(236,137,79,0.18)"></i><i style="left:768px;background:rgba(236,134,80,0.18)"></i><i style="left:780px;background:rgba(236,130,80,0.18)"></i><i style="left:792px;background:rgba(236,127,81,0.18)"></i><i style="left:804px;background:rgba(236,124,82,0.18)"></i><i style="left:816px;background:rgba(236,120,83,0.18)"></i><i style="left:828px;background:rgba(236,117,83,0.18)"></i><i style="left:840px;background:rgba(235,114,84,0.18)"></i><i style="left:852px;background:rgba(235,110,85,0.18)"></i><i style="left:864px;background:rgba(235,107,86,0.18)"></i><i style="left:876px;background:rgba(235,104,87,0.18)"></i><i style="left:888px;background:rgba(234,100,88,0.18)"></i><i style="left:900px;background:rgba(234,97,89,0.18)"></i><i style="left:912px;background:rgba(234,93,90,0.18)"></i><i style="left:924px;background:rgba(234,90,91,0.18)"></i><i style="left:936px;background:rgba(233,86,92,0.18)"></i><i style="left:948px;background:rgba(233,83,93,0.18)"></i></div>
<span class="t" style="left:1212.50px;top:280px;font-size:28.6px;letter-spacing:-1.413px;color:rgb(124,190,110);-webkit-text-stroke:0.45px currentColor;">97</span>
</div>
</body></html>
